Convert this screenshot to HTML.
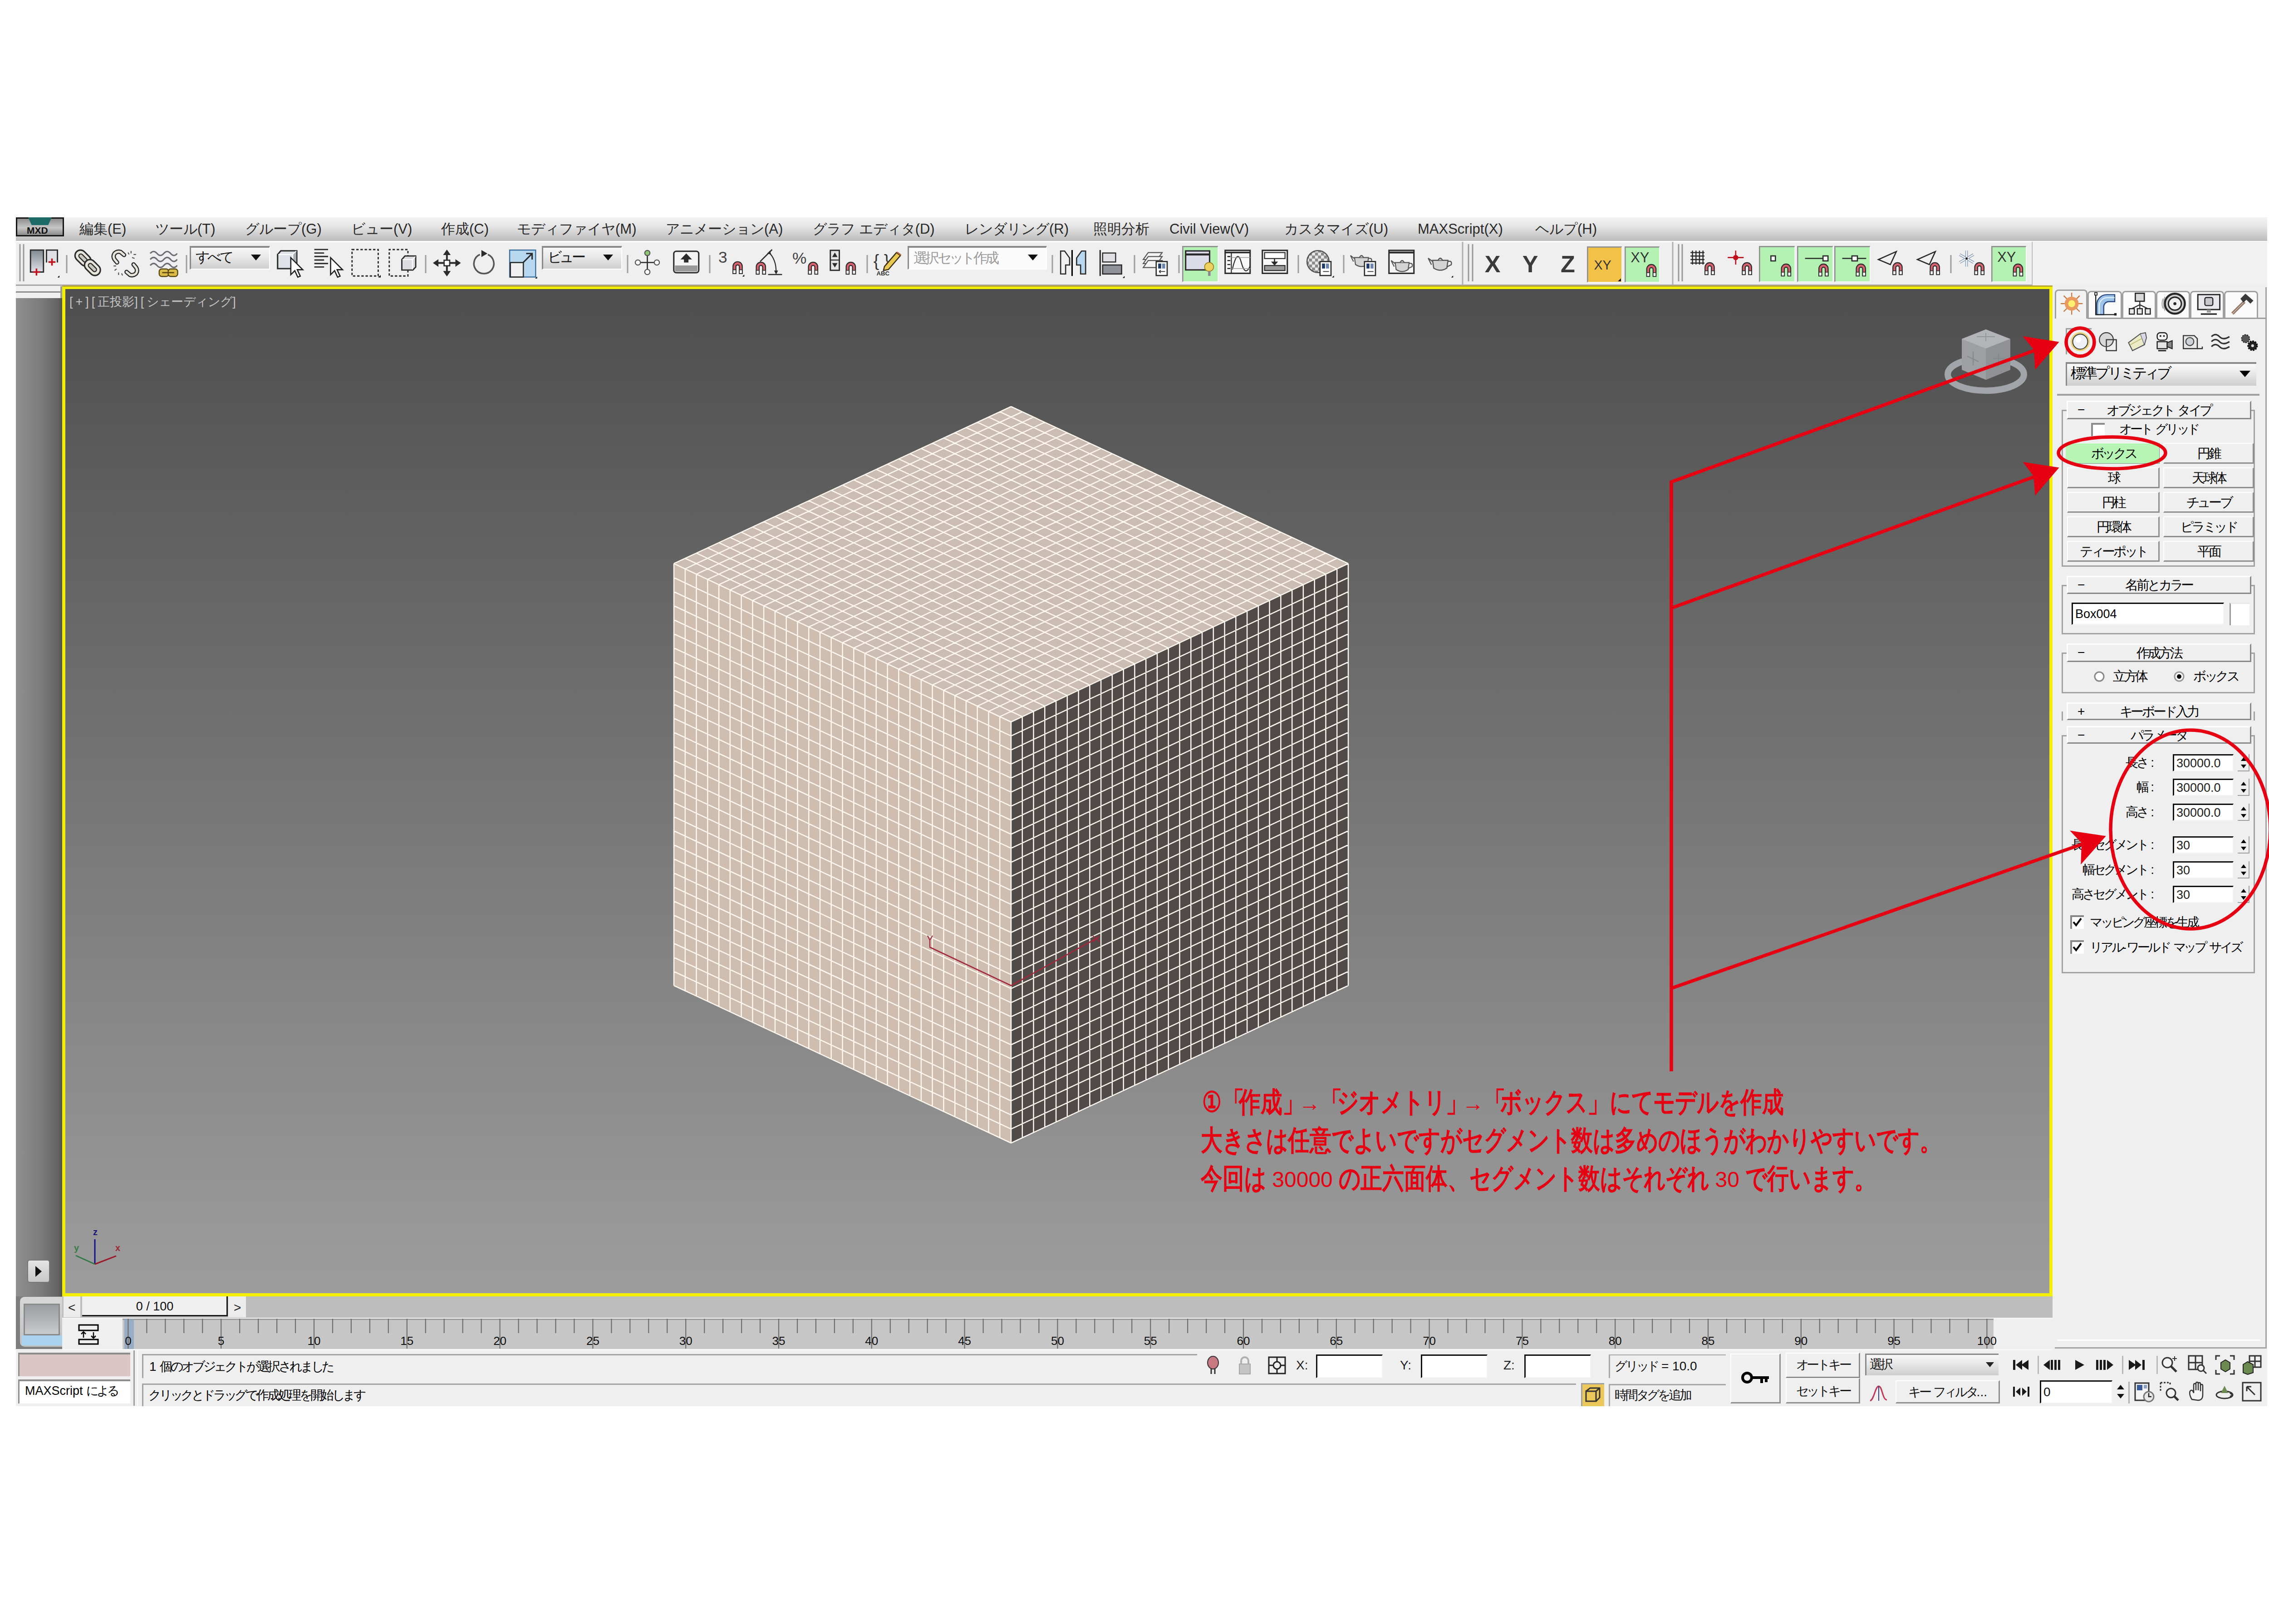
<!DOCTYPE html><html><head><meta charset="utf-8"><style>
*{margin:0;padding:0;box-sizing:border-box}
html,body{width:5031px;height:3579px;background:#fff;overflow:hidden;font-family:"Liberation Sans",sans-serif}
.a{position:absolute}
.t{position:absolute;white-space:nowrap;line-height:1;font-family:"Liberation Sans",sans-serif}
.c{transform:translate(-50%,-50%)}
i{display:inline-block;text-align:center;font-style:normal}
.j i{width:1em}
.k i{width:.85em}
.h i{width:.75em}
.s i{-webkit-text-stroke:1.6px;transform:scaleY(1.3);transform-origin:50% 70%}
.mt{position:absolute;top:489px;font-size:31px;color:#2a2a2a;white-space:nowrap;line-height:32px}
.btn{position:absolute;background:#efefef;border-top:2px solid #fff;border-left:2px solid #fff;border-right:3px solid #8e8e8e;border-bottom:3px solid #8e8e8e}
.fld{position:absolute;background:#fff;border-top:3px solid #111;border-left:3px solid #111;border-right:2px solid #f4f4f4;border-bottom:2px solid #f4f4f4}
.hdr{position:absolute;background:#efefef;border-top:3px solid #fff;border-left:3px solid #fff;border-right:3px solid #8a8a8a;border-bottom:3px solid #8a8a8a}
.grp{position:absolute;border:3px solid #9a9a9a;border-right-color:#9a9a9a;border-bottom-color:#9a9a9a}
</style></head><body><div class="a" style="left:35px;top:479px;width:4961px;height:2620px;background:#efefef"></div><div class="a" style="left:35px;top:479px;width:4961px;height:52px;background:linear-gradient(#f4f4f4,#e4e4e4 40%,#bcbcbc)"></div><div class="a" style="left:35px;top:479px;width:106px;height:42px;background:linear-gradient(#8d8d8d,#c6c6c6 55%,#8a8a8a);border:3px solid #151515"></div><div class="a" style="left:62px;top:479px;width:52px;height:17px;background:#1d6b68;clip-path:polygon(0 0,100% 0,85% 100%,15% 100%)"></div><div class="t" style="left:59px;top:497px;font-size:21px;font-weight:bold;color:#111">MXD</div><div class="mt" style="left:175px"><span class="j"><i>編</i><i>集</i></span>(E)</div><div class="mt" style="left:342px"><span class="j"><i>ツ</i><i>ー</i><i>ル</i></span>(T)</div><div class="mt" style="left:540px"><span class="j"><i>グ</i><i>ル</i><i>ー</i><i>プ</i></span>(G)</div><div class="mt" style="left:774px"><span class="j"><i>ビ</i><i>ュ</i><i>ー</i></span>(V)</div><div class="mt" style="left:972px"><span class="j"><i>作</i><i>成</i></span>(C)</div><div class="mt" style="left:1139px"><span class="j"><i>モ</i><i>デ</i><i>ィ</i><i>フ</i><i>ァ</i><i>イ</i><i>ヤ</i></span>(M)</div><div class="mt" style="left:1467px"><span class="j"><i>ア</i><i>ニ</i><i>メ</i><i>ー</i><i>シ</i><i>ョ</i><i>ン</i></span>(A)</div><div class="mt" style="left:1791px"><span class="j"><i>グ</i><i>ラ</i><i>フ</i></span> <span class="j"><i>エ</i><i>デ</i><i>ィ</i><i>タ</i></span>(D)</div><div class="mt" style="left:2126px"><span class="j"><i>レ</i><i>ン</i><i>ダ</i><i>リ</i><i>ン</i><i>グ</i></span>(R)</div><div class="mt" style="left:2409px"><span class="j"><i>照</i><i>明</i><i>分</i><i>析</i></span></div><div class="mt" style="left:2577px">Civil View(V)</div><div class="mt" style="left:2830px"><span class="j"><i>カ</i><i>ス</i><i>タ</i><i>マ</i><i>イ</i><i>ズ</i></span>(U)</div><div class="mt" style="left:3124px">MAXScript(X)</div><div class="mt" style="left:3383px"><span class="j"><i>ヘ</i><i>ル</i><i>プ</i></span>(H)</div><div class="a" style="left:35px;top:531px;width:4961px;height:98px;background:#efefef"></div><div class="a" style="left:35px;top:531px;width:4961px;height:3px;background:#fdfdfd"></div><div class="a" style="left:35px;top:627px;width:4444px;height:3px;background:#a8a8a8"></div><svg class="a" style="left:0;top:0" width="5031" height="700"><g transform="translate(65,550) scale(2.2)"><defs><linearGradient id="gsl" x1="0" y1="0" x2="0" y2="1"><stop offset="0" stop-color="#7f8a90"/><stop offset="1" stop-color="#e0e0ea"/></linearGradient></defs><rect x="1" y="0.5" width="13" height="22" fill="url(#gsl)" stroke="#2b2b2b" stroke-width="1.3"/><path d="M17 13V0.5H28V13" fill="#dfe0e6" stroke="#2b2b2b" stroke-width="1.3"/><path d="M7 19V26M3.5 22.5H10.5M22.5 9V16M19 12.5H26" stroke="#c0101a" stroke-width="1.6"/><polygon points="28,28 30,26 30,28" fill="#000"/></g><g transform="translate(163,550) scale(2.2)"><g transform="translate(9,8.5) rotate(-45)"><rect x="-5.5" y="-9" width="11" height="18" rx="5.5" fill="#e8e6dc" stroke="#2b2b2b" stroke-width="1.4"/><rect x="-2" y="-5" width="4" height="10" rx="2" fill="#c8c8c0" stroke="#2b2b2b" stroke-width="1.1"/></g><g transform="translate(18.5,18) rotate(-45)"><rect x="-5.5" y="-9" width="11" height="18" rx="5.5" fill="#e8e6dc" stroke="#2b2b2b" stroke-width="1.4"/><rect x="-2" y="-5" width="4" height="10" rx="2" fill="#c8c8c0" stroke="#2b2b2b" stroke-width="1.1"/></g></g><g transform="translate(247,552) scale(2.2)"><path d="M5 12L2.5 9Q0.5 6 2.5 3Q5 0.5 8.5 1.5L12 4.5" fill="none" stroke="#2b2b2b" stroke-width="4.4" stroke-linecap="round"/><path d="M5 12L2.5 9Q0.5 6 2.5 3Q5 0.5 8.5 1.5L12 4.5" fill="none" stroke="#e8e6dc" stroke-width="2.2" stroke-linecap="round"/><path d="M21.5 14L24 17Q26 20 24 23Q21.5 25.5 18 24.5L14.5 21.5" fill="none" stroke="#2b2b2b" stroke-width="4.4" stroke-linecap="round"/><path d="M21.5 14L24 17Q26 20 24 23Q21.5 25.5 18 24.5L14.5 21.5" fill="none" stroke="#e8e6dc" stroke-width="2.2" stroke-linecap="round"/><path d="M16 2L17 4M19 0.5V3M21.5 4H24M20 7L22.5 8M1.5 15.5H4M2.5 20L4.5 18.5M6.5 22V24.5M9.5 23L10.5 25" stroke="#555" stroke-width="1"/></g><g transform="translate(331,552) scale(2.2)"><path d="M0 3Q3.4 -1 6.8 3T13.6 3T20.4 3T27 3M0 9Q3.4 5 6.8 9T13.6 9T20.4 9T27 9M0 15Q3.4 11 6.8 15T13.6 15T20.4 15T27 15" fill="none" stroke="#6a6e74" stroke-width="1.4"/><rect x="9" y="18.5" width="9.5" height="7.5" rx="2.5" fill="#dcbc48" stroke="#5a4810" stroke-width="1.1"/><rect x="18" y="18.5" width="9.5" height="7.5" rx="2.5" fill="#dcbc48" stroke="#5a4810" stroke-width="1.1"/><path d="M12 22.2H24" stroke="#5a4810" stroke-width="1.2"/></g><g transform="translate(610,551) scale(2.2)"><path d="M0.8 4.5L4 0.8H20V18.6H0.8Z" fill="#dfe2e8" stroke="#2b2b2b" stroke-width="1.4"/><path d="M1.5 4.5H16V18M16 4.5L19.5 1" fill="none" stroke="#fff" stroke-width="1"/><path d="M16.5 4.5L19.5 1.5V16L16.5 18Z" fill="#a8acb4"/><path d="M14 7.7V24.7L18 20.7L21 27.2L23.5 26.2L20.5 19.7H26Z" fill="#fff" stroke="#222" stroke-width="1.2" stroke-linejoin="miter"/></g><g transform="translate(690,551) scale(2.2)"><path d="M1.2 -0.5H15M1.2 3H11M1.2 6.5H15M1.2 10H11M1.2 13.5H15M1.2 17H11" stroke="#2b2b2b" stroke-width="1.3"/><path d="M17.5 7.7V24.7L21.5 20.7L24.5 27.2L27.0 26.2L24.0 19.7H29.5Z" fill="#fff" stroke="#222" stroke-width="1.2" stroke-linejoin="miter"/></g><g transform="translate(774,550) scale(2.2)"><rect x="0.8" y="0" width="26.2" height="26.5" fill="none" stroke="#2b2b2b" stroke-width="1.3" stroke-dasharray="2.4 1.8"/><polygon points="27,28 29.5,25.5 29.5,28" fill="#000"/></g><g transform="translate(856,550) scale(2.2)"><path d="M13 26.5H0.8V0H19.5V6" fill="none" stroke="#2b2b2b" stroke-width="1.3" stroke-dasharray="2.4 1.8"/><path d="M19.5 20.5V26.5H13" fill="none" stroke="#2b2b2b" stroke-width="1.3" stroke-dasharray="2.4 1.8"/><path d="M13.4 10L16.5 6.4H27.3V17.5L24.5 20.5H13.4Z" fill="#dcdde0" stroke="#2b2b2b" stroke-width="1.3"/><path d="M14 10H24V20M24 10L27 7" fill="none" stroke="#fff" stroke-width="0.9"/></g><g transform="translate(954,551) scale(2.2)"><path d="M14 3V25M3 13H25" stroke="#2b2b2b" stroke-width="1.8"/><polygon points="14,-0.5 17.8,5 10.2,5" fill="#2b2b2b"/><polygon points="14,26.5 17.8,21 10.2,21" fill="#2b2b2b"/><polygon points="0,13 5.5,9.2 5.5,16.8" fill="#2b2b2b"/><polygon points="28,13 22.5,9.2 22.5,16.8" fill="#2b2b2b"/><rect x="11.2" y="10.2" width="5.6" height="5.6" fill="#fff" stroke="#2b2b2b" stroke-width="1.2"/></g><g transform="translate(1041,551) scale(2.2)"><path d="M15.5 4.5A10 10 0 1 1 7.5 4.5" fill="none" stroke="#555" stroke-width="1.6"/><polygon points="9,0 15,3.5 9,7" fill="#2b2b2b"/></g><g transform="translate(1122,550) scale(2.2)"><rect x="0.5" y="0.5" width="26" height="27" fill="#b8d8f0" stroke="#3a6ea0" stroke-width="1.1"/><rect x="1.2" y="13" width="13" height="14.5" fill="#f0f0f0" stroke="#2b2b2b" stroke-width="1.2"/><path d="M14 13L23 4M17 4H23V10" fill="none" stroke="#2b2b2b" stroke-width="1.4"/><polygon points="26,29 28,27 28,29" fill="#000"/></g><g transform="translate(1399,551) scale(2.2)"><path d="M12.5 4V21M3 12.5H22" stroke="#2b2b2b" stroke-width="1.2"/><circle cx="12.5" cy="3" r="2.6" fill="#8cc870" stroke="#555" stroke-width="1"/><circle cx="3" cy="12.5" r="2.6" fill="#fff" stroke="#555" stroke-width="1"/><circle cx="22" cy="12.5" r="2.6" fill="#fff" stroke="#555" stroke-width="1"/><circle cx="12.5" cy="22" r="2.6" fill="#fff" stroke="#555" stroke-width="1"/></g><g transform="translate(1483,552) scale(2.2)"><rect x="0.8" y="0.8" width="25" height="21.5" rx="2.5" fill="#f4f4f4" stroke="#2b2b2b" stroke-width="1.4"/><rect x="2" y="15" width="22.5" height="6" fill="#9a9a9a"/><polygon points="13.3,3 19,9 15.5,9 15.5,12 11,12 11,9 7.5,9" fill="#2b2b2b"/></g><g transform="translate(1583,550) scale(2.2)"><text x="0" y="13" font-size="16" font-family="Liberation Sans" fill="#444">3</text><g transform="translate(13.5,11) scale(1.45)"><path d="M0.8 9V4A3.2 3.2 0 0 1 7.2 4V9H5.2V4.2A1.2 1.2 0 0 0 2.8 4.2V9Z" fill="#d8636e" stroke="#2b2b2b" stroke-width="0.7"/><rect x="0.8" y="6.4" width="2" height="2.6" fill="#fff" stroke="#2b2b2b" stroke-width="0.5"/><rect x="5.2" y="6.4" width="2" height="2.6" fill="#fff" stroke="#2b2b2b" stroke-width="0.5"/></g><polygon points="24,27 26,25 26,27" fill="#000"/></g><g transform="translate(1664,550) scale(2.2)"><g transform="translate(0,11.5) scale(1.45)"><path d="M0.8 9V4A3.2 3.2 0 0 1 7.2 4V9H5.2V4.2A1.2 1.2 0 0 0 2.8 4.2V9Z" fill="#d8636e" stroke="#2b2b2b" stroke-width="0.7"/><rect x="0.8" y="6.4" width="2" height="2.6" fill="#fff" stroke="#2b2b2b" stroke-width="0.5"/><rect x="5.2" y="6.4" width="2" height="2.6" fill="#fff" stroke="#2b2b2b" stroke-width="0.5"/></g><path d="M5 12L17 0M13 25H27" stroke="#2b2b2b" stroke-width="1.2"/><path d="M14 3Q21 10 21 22" fill="none" stroke="#2b2b2b" stroke-width="1"/><polygon points="19,21 23,21 21,25" fill="#2b2b2b"/><polygon points="12,4 15,1 16,5" fill="#2b2b2b"/></g><g transform="translate(1746,550) scale(2.2)"><text x="0" y="14" font-size="16" font-family="Liberation Sans" fill="#444">%</text><g transform="translate(15,11.5) scale(1.45)"><path d="M0.8 9V4A3.2 3.2 0 0 1 7.2 4V9H5.2V4.2A1.2 1.2 0 0 0 2.8 4.2V9Z" fill="#d8636e" stroke="#2b2b2b" stroke-width="0.7"/><rect x="0.8" y="6.4" width="2" height="2.6" fill="#fff" stroke="#2b2b2b" stroke-width="0.5"/><rect x="5.2" y="6.4" width="2" height="2.6" fill="#fff" stroke="#2b2b2b" stroke-width="0.5"/></g></g><g transform="translate(1828,550) scale(2.2)"><rect x="0.8" y="0.8" width="9" height="20" fill="#e4e4e4" stroke="#2b2b2b" stroke-width="1.3"/><path d="M1 10.5H10" stroke="#2b2b2b" stroke-width="1"/><polygon points="5.3,3 8,7.5 2.6,7.5" fill="#2b2b2b"/><polygon points="5.3,18 8,13.5 2.6,13.5" fill="#2b2b2b"/><g transform="translate(15.5,11.5) scale(1.45)"><path d="M0.8 9V4A3.2 3.2 0 0 1 7.2 4V9H5.2V4.2A1.2 1.2 0 0 0 2.8 4.2V9Z" fill="#d8636e" stroke="#2b2b2b" stroke-width="0.7"/><rect x="0.8" y="6.4" width="2" height="2.6" fill="#fff" stroke="#2b2b2b" stroke-width="0.5"/><rect x="5.2" y="6.4" width="2" height="2.6" fill="#fff" stroke="#2b2b2b" stroke-width="0.5"/></g></g><g transform="translate(1927,550) scale(2.2)"><text x="-1" y="17" font-size="17" font-family="Liberation Sans" fill="#333">{ }</text><text x="2" y="26" font-size="6" font-weight="bold" font-family="Liberation Sans" fill="#333">ABC</text><path d="M10 17L22 3L26 6L14 20L9 21Z" fill="#e8c850" stroke="#3a2a10" stroke-width="1.1"/><path d="M22 3L26 6L27 5L23 2Z" fill="#b06a3a"/></g><g transform="translate(2335,551) scale(2.2)"><path d="M1 1L5 1L10 8V15L6 15V24H1Z" fill="#f0f0f0" stroke="#2b2b2b" stroke-width="1.2"/><path d="M12.5 0V26" stroke="#000" stroke-width="1.4"/><path d="M26 1H22L17 8V15H21V24H26Z" fill="#b8d8f0" stroke="#2b2b2b" stroke-width="1.2"/></g><g transform="translate(2421,551) scale(2.2)"><path d="M1.5 0V26" stroke="#2b2b2b" stroke-width="1.4"/><rect x="4" y="3" width="13" height="9" fill="#e0e0e4" stroke="#2b2b2b" stroke-width="1.1"/><rect x="4" y="15" width="19" height="9" fill="#8f9299" stroke="#2b2b2b" stroke-width="1.2"/><polygon points="24,28 26,26 26,28" fill="#000"/></g><g transform="translate(2517,550) scale(2.2)"><path d="M1 10L6 3H20L15 10Z" fill="#f4f4f4" stroke="#555" stroke-width="1"/><path d="M1 14L6 7H20L15 14Z" fill="#f4f4f4" stroke="#555" stroke-width="1"/><path d="M1 18L6 11H20L15 18Z" fill="#f4f4f4" stroke="#555" stroke-width="1"/><rect x="14" y="12" width="11" height="14" fill="#fff" stroke="#2b2b2b" stroke-width="1.2"/><rect x="16" y="14" width="3" height="5" fill="#1e3a6a"/><rect x="20" y="14" width="3" height="5" fill="#6a86b0"/><path d="M17 22H23M17 22L18.5 20.5M17 22L18.5 23.5" stroke="#333" stroke-width="0.8"/></g><g transform="translate(2605,542) scale(2.2)"><rect x="0" y="0" width="36" height="36" fill="#b4f2b4"/><path d="M0.6 36V0.6H36" fill="none" stroke="#8f8f8f" stroke-width="1.2"/><path d="M36 0.6V36H0.6" fill="none" stroke="#fafafa" stroke-width="0.8"/><rect x="3.5" y="5" width="24" height="19" fill="#dcdce8" stroke="#2b2b2b" stroke-width="1.4"/><path d="M3.5 8.5H27.5" stroke="#2b2b2b" stroke-width="2"/><circle cx="27" cy="21" r="4.5" fill="#f0d060" stroke="#a08020" stroke-width="0.8"/><rect x="26" y="25" width="2.4" height="5" fill="#888"/></g><g transform="translate(2698,550) scale(2.2)"><rect x="0.8" y="0.8" width="25" height="23" fill="#f8f8f8" stroke="#2b2b2b" stroke-width="1.4"/><path d="M1 3H26" stroke="#2b2b2b" stroke-width="1.6"/><path d="M7 3V24" stroke="#2b2b2b" stroke-width="1"/><path d="M3 7H6M3 11H6M3 15H6M3 19H6" stroke="#2b2b2b" stroke-width="1.2"/><path d="M8 20Q13 -2 17 13T26 16" fill="none" stroke="#2b2b2b" stroke-width="1"/><path d="M7 8H26M7 19H26" stroke="#999" stroke-width="0.7"/></g><g transform="translate(2780,550) scale(2.2)"><rect x="0.8" y="0.8" width="25" height="23" fill="#f8f8f8" stroke="#2b2b2b" stroke-width="1.4"/><rect x="3" y="3" width="20.5" height="6" fill="#fff" stroke="#2b2b2b" stroke-width="1"/><rect x="3" y="16" width="20.5" height="5" fill="#9a9a9a" stroke="#2b2b2b" stroke-width="1"/><path d="M13 9V14" stroke="#2b2b2b" stroke-width="1.2"/><polygon points="9.5,12 16.5,12 13,16" fill="#2b2b2b"/></g><g transform="translate(2878,550) scale(2.2)"><defs><pattern id="chk" width="6" height="6" patternUnits="userSpaceOnUse"><rect width="6" height="6" fill="#e8e8e8"/><rect width="3" height="3" fill="#8a8a8a"/><rect x="3" y="3" width="3" height="3" fill="#8a8a8a"/></pattern></defs><circle cx="12" cy="12" r="11" fill="url(#chk)" stroke="#555" stroke-width="1.2"/><rect x="14" y="12" width="11" height="14" fill="#fff" stroke="#2b2b2b" stroke-width="1.2"/><rect x="16" y="14" width="3" height="5" fill="#1e3a6a"/><rect x="20" y="14" width="3" height="5" fill="#6a86b0"/><path d="M17 22H23" stroke="#333" stroke-width="0.8"/><polygon points="26,28 28,26 28,28" fill="#000"/></g><g transform="translate(2976,550) scale(2.2)"><g transform="translate(0,0) scale(1)"><path d="M4 8H18L17 15Q11 19 5 15Z" fill="#d4d4d4" stroke="#555" stroke-width="1"/><path d="M9 8Q11 4 13 8" fill="#c0c0c0" stroke="#555" stroke-width="1"/><path d="M4 9L0 6L3 12M18 9Q22 8 21 12L17 14" fill="none" stroke="#555" stroke-width="1"/></g><rect x="14" y="12" width="11" height="14" fill="#fff" stroke="#2b2b2b" stroke-width="1.2"/><rect x="16" y="14" width="3" height="5" fill="#1e3a6a"/><rect x="20" y="14" width="3" height="5" fill="#6a86b0"/><path d="M17 22H23" stroke="#333" stroke-width="0.8"/></g><g transform="translate(3059,550) scale(2.2)"><rect x="0.8" y="0.8" width="25" height="23" fill="#f4f4f4" stroke="#2b2b2b" stroke-width="1.4"/><path d="M1 3H26" stroke="#2b2b2b" stroke-width="1.8"/><g transform="translate(3,5) scale(1)"><path d="M4 8H18L17 15Q11 19 5 15Z" fill="#d4d4d4" stroke="#555" stroke-width="1"/><path d="M9 8Q11 4 13 8" fill="#c0c0c0" stroke="#555" stroke-width="1"/><path d="M4 9L0 6L3 12M18 9Q22 8 21 12L17 14" fill="none" stroke="#555" stroke-width="1"/></g></g><g transform="translate(3145,550) scale(2.2)"><g transform="translate(1,2) scale(1.1)"><path d="M4 8H18L17 15Q11 19 5 15Z" fill="#d4d4d4" stroke="#555" stroke-width="1"/><path d="M9 8Q11 4 13 8" fill="#c0c0c0" stroke="#555" stroke-width="1"/><path d="M4 9L0 6L3 12M18 9Q22 8 21 12L17 14" fill="none" stroke="#555" stroke-width="1"/></g><polygon points="24,28 26,26 26,28" fill="#000"/></g><g transform="translate(3497,543) scale(2.2)"><rect x="0" y="0" width="35" height="36" fill="#f2c248"/><path d="M0.6 36V0.6H35" fill="none" stroke="#8f8f8f" stroke-width="1.2"/><path d="M35 0.6V36H0.6" fill="none" stroke="#fafafa" stroke-width="0.8"/><text x="7" y="23" font-size="13" font-family="Liberation Sans" fill="#333">XY</text><polygon points="31,35 34,32 34,35" fill="#000"/></g><g transform="translate(3580,543) scale(2.2)"><rect x="0" y="0" width="35" height="36" fill="#b4f2b4"/><path d="M0.6 36V0.6H35" fill="none" stroke="#8f8f8f" stroke-width="1.2"/><path d="M35 0.6V36H0.6" fill="none" stroke="#fafafa" stroke-width="0.8"/><text x="6" y="16" font-size="14" font-family="Liberation Sans" fill="#333">XY</text><g transform="translate(21,17) scale(1.45)"><path d="M0.8 9V4A3.2 3.2 0 0 1 7.2 4V9H5.2V4.2A1.2 1.2 0 0 0 2.8 4.2V9Z" fill="#d8636e" stroke="#2b2b2b" stroke-width="0.7"/><rect x="0.8" y="6.4" width="2" height="2.6" fill="#fff" stroke="#2b2b2b" stroke-width="0.5"/><rect x="5.2" y="6.4" width="2" height="2.6" fill="#fff" stroke="#2b2b2b" stroke-width="0.5"/></g></g><g transform="translate(3723,550) scale(2.2)"><path d="M3 1V15M6.5 1V15M10 1V15M13.5 1V15M1 3H15M1 6.5H15M1 10H15M1 13.5H15" stroke="#2b2b2b" stroke-width="1.1"/><g transform="translate(14.4,12) scale(1.45)"><path d="M0.8 9V4A3.2 3.2 0 0 1 7.2 4V9H5.2V4.2A1.2 1.2 0 0 0 2.8 4.2V9Z" fill="#d8636e" stroke="#2b2b2b" stroke-width="0.7"/><rect x="0.8" y="6.4" width="2" height="2.6" fill="#fff" stroke="#2b2b2b" stroke-width="0.5"/><rect x="5.2" y="6.4" width="2" height="2.6" fill="#fff" stroke="#2b2b2b" stroke-width="0.5"/></g></g><g transform="translate(3805,550) scale(2.2)"><path d="M9 1V15M1 8H17" stroke="#c0101a" stroke-width="1.2"/><circle cx="9" cy="8" r="2.6" fill="#c0101a"/><g transform="translate(14.5,12) scale(1.45)"><path d="M0.8 9V4A3.2 3.2 0 0 1 7.2 4V9H5.2V4.2A1.2 1.2 0 0 0 2.8 4.2V9Z" fill="#d8636e" stroke="#2b2b2b" stroke-width="0.7"/><rect x="0.8" y="6.4" width="2" height="2.6" fill="#fff" stroke="#2b2b2b" stroke-width="0.5"/><rect x="5.2" y="6.4" width="2" height="2.6" fill="#fff" stroke="#2b2b2b" stroke-width="0.5"/></g></g><g transform="translate(3876,542) scale(2.2)"><rect x="0" y="0" width="36" height="36" fill="#b4f2b4"/><path d="M0.6 36V0.6H36" fill="none" stroke="#8f8f8f" stroke-width="1.2"/><path d="M36 0.6V36H0.6" fill="none" stroke="#fafafa" stroke-width="0.8"/><rect x="12" y="10" width="4.5" height="5" fill="#fff" stroke="#2b2b2b" stroke-width="1.2"/><g transform="translate(21.4,17) scale(1.45)"><path d="M0.8 9V4A3.2 3.2 0 0 1 7.2 4V9H5.2V4.2A1.2 1.2 0 0 0 2.8 4.2V9Z" fill="#d8636e" stroke="#2b2b2b" stroke-width="0.7"/><rect x="0.8" y="6.4" width="2" height="2.6" fill="#fff" stroke="#2b2b2b" stroke-width="0.5"/><rect x="5.2" y="6.4" width="2" height="2.6" fill="#fff" stroke="#2b2b2b" stroke-width="0.5"/></g></g><g transform="translate(3960,542) scale(2.2)"><rect x="0" y="0" width="36" height="36" fill="#b4f2b4"/><path d="M0.6 36V0.6H36" fill="none" stroke="#8f8f8f" stroke-width="1.2"/><path d="M36 0.6V36H0.6" fill="none" stroke="#fafafa" stroke-width="0.8"/><path d="M8 12.5H27" stroke="#2b2b2b" stroke-width="1.2"/><rect x="26" y="10" width="5" height="5" fill="#fff" stroke="#2b2b2b" stroke-width="1.2"/><g transform="translate(20.7,17) scale(1.45)"><path d="M0.8 9V4A3.2 3.2 0 0 1 7.2 4V9H5.2V4.2A1.2 1.2 0 0 0 2.8 4.2V9Z" fill="#d8636e" stroke="#2b2b2b" stroke-width="0.7"/><rect x="0.8" y="6.4" width="2" height="2.6" fill="#fff" stroke="#2b2b2b" stroke-width="0.5"/><rect x="5.2" y="6.4" width="2" height="2.6" fill="#fff" stroke="#2b2b2b" stroke-width="0.5"/></g></g><g transform="translate(4042,542) scale(2.2)"><rect x="0" y="0" width="36" height="36" fill="#b4f2b4"/><path d="M0.6 36V0.6H36" fill="none" stroke="#8f8f8f" stroke-width="1.2"/><path d="M36 0.6V36H0.6" fill="none" stroke="#fafafa" stroke-width="0.8"/><path d="M8 12.5H32" stroke="#2b2b2b" stroke-width="1.2"/><rect x="17.7" y="10" width="5.5" height="5" fill="#fff" stroke="#2b2b2b" stroke-width="1.2"/><g transform="translate(20.9,17) scale(1.45)"><path d="M0.8 9V4A3.2 3.2 0 0 1 7.2 4V9H5.2V4.2A1.2 1.2 0 0 0 2.8 4.2V9Z" fill="#d8636e" stroke="#2b2b2b" stroke-width="0.7"/><rect x="0.8" y="6.4" width="2" height="2.6" fill="#fff" stroke="#2b2b2b" stroke-width="0.5"/><rect x="5.2" y="6.4" width="2" height="2.6" fill="#fff" stroke="#2b2b2b" stroke-width="0.5"/></g></g><g transform="translate(4137,550) scale(2.2)"><path d="M1 10L19 2L13 15Z" fill="none" stroke="#2b2b2b" stroke-width="1.2"/><g transform="translate(14.4,12) scale(1.45)"><path d="M0.8 9V4A3.2 3.2 0 0 1 7.2 4V9H5.2V4.2A1.2 1.2 0 0 0 2.8 4.2V9Z" fill="#d8636e" stroke="#2b2b2b" stroke-width="0.7"/><rect x="0.8" y="6.4" width="2" height="2.6" fill="#fff" stroke="#2b2b2b" stroke-width="0.5"/><rect x="5.2" y="6.4" width="2" height="2.6" fill="#fff" stroke="#2b2b2b" stroke-width="0.5"/></g></g><g transform="translate(4223,550) scale(2.2)"><path d="M1 10L19 2L13 15Z" fill="none" stroke="#2b2b2b" stroke-width="1.2"/><g transform="translate(12.7,12) scale(1.45)"><path d="M0.8 9V4A3.2 3.2 0 0 1 7.2 4V9H5.2V4.2A1.2 1.2 0 0 0 2.8 4.2V9Z" fill="#d8636e" stroke="#2b2b2b" stroke-width="0.7"/><rect x="0.8" y="6.4" width="2" height="2.6" fill="#fff" stroke="#2b2b2b" stroke-width="0.5"/><rect x="5.2" y="6.4" width="2" height="2.6" fill="#fff" stroke="#2b2b2b" stroke-width="0.5"/></g></g><g transform="translate(4316,550) scale(2.2)"><path d="M8 1V17M1 5L15 13M1 13L15 5" stroke="#8aa0c0" stroke-width="2.6"/><path d="M8 1V17M1 5L15 13M1 13L15 5" stroke="#fff" stroke-width="1.1"/><rect x="7" y="8" width="2" height="2" fill="#000"/><g transform="translate(15,12) scale(1.45)"><path d="M0.8 9V4A3.2 3.2 0 0 1 7.2 4V9H5.2V4.2A1.2 1.2 0 0 0 2.8 4.2V9Z" fill="#d8636e" stroke="#2b2b2b" stroke-width="0.7"/><rect x="0.8" y="6.4" width="2" height="2.6" fill="#fff" stroke="#2b2b2b" stroke-width="0.5"/><rect x="5.2" y="6.4" width="2" height="2.6" fill="#fff" stroke="#2b2b2b" stroke-width="0.5"/></g></g><g transform="translate(4388,542) scale(2.2)"><rect x="0" y="0" width="35" height="36" fill="#b4f2b4"/><path d="M0.6 36V0.6H35" fill="none" stroke="#8f8f8f" stroke-width="1.2"/><path d="M35 0.6V36H0.6" fill="none" stroke="#fafafa" stroke-width="0.8"/><text x="6" y="16" font-size="14" font-family="Liberation Sans" fill="#333">XY</text><g transform="translate(21,17) scale(1.45)"><path d="M0.8 9V4A3.2 3.2 0 0 1 7.2 4V9H5.2V4.2A1.2 1.2 0 0 0 2.8 4.2V9Z" fill="#d8636e" stroke="#2b2b2b" stroke-width="0.7"/><rect x="0.8" y="6.4" width="2" height="2.6" fill="#fff" stroke="#2b2b2b" stroke-width="0.5"/><rect x="5.2" y="6.4" width="2" height="2.6" fill="#fff" stroke="#2b2b2b" stroke-width="0.5"/></g></g><path d="M147 562V602M411 562V602M938 562V602M1383 562V602M1564 562V602M1911 562V602M2319 562V602M2500 562V602M2598 562V602M2861 562V602M2961 562V602M4299 562V602" stroke="#a0a0a0" stroke-width="3"/><path d="M3223 533V628M3686 533V628M4479 533V628" stroke="#b0b0b0" stroke-width="3"/><path d="M44 538V620M52 538V620M3236 538V620M3245 538V620M3699 538V620M3707 538V620" stroke="#9a9a9a" stroke-width="3"/></svg><div class="t c" style="left:3289px;top:582px;font-size:52px;color:#3a3a3a;font-weight:bold">X</div><div class="t c" style="left:3372px;top:582px;font-size:52px;color:#3a3a3a;font-weight:bold">Y</div><div class="t c" style="left:3455px;top:582px;font-size:52px;color:#3a3a3a;font-weight:bold">Z</div><div class="a" style="left:418px;top:542px;width:177px;height:52px;background:linear-gradient(#f8f8f8,#e6e6e6 50%,#cdcdcd);border-top:4px solid #8a8a8a;border-left:3px solid #8a8a8a;border-right:2px solid #fff;border-bottom:2px solid #fff"></div><div class="t" style="left:431px;top:551px;font-size:31px;color:#111;"><span class="k"><i>す</i><i>べ</i><i>て</i></span></div><svg class="a" style="left:553px;top:561px" width="22" height="14"><polygon points="0,0 22,0 11,13" fill="#111"/></svg><div class="a" style="left:1194px;top:542px;width:177px;height:52px;background:linear-gradient(#f8f8f8,#e6e6e6 50%,#cdcdcd);border-top:4px solid #8a8a8a;border-left:3px solid #8a8a8a;border-right:2px solid #fff;border-bottom:2px solid #fff"></div><div class="t" style="left:1207px;top:551px;font-size:31px;color:#111;"><span class="k"><i>ビ</i><i>ュ</i><i>ー</i></span></div><svg class="a" style="left:1329px;top:561px" width="22" height="14"><polygon points="0,0 22,0 11,13" fill="#111"/></svg><div class="a" style="left:2000px;top:542px;width:307px;height:52px;background:linear-gradient(#f8f8f8,#e6e6e6 50%,#cdcdcd);border-top:4px solid #8a8a8a;border-left:3px solid #8a8a8a;border-right:2px solid #fff;border-bottom:2px solid #fff"></div><div class="t" style="left:2013px;top:551px;font-size:31px;color:#999;"><span class="k"><i>選</i><i>択</i><i>セ</i><i>ッ</i><i>ト</i><i>作</i><i>成</i></span></div><svg class="a" style="left:2265px;top:561px" width="22" height="14"><polygon points="0,0 22,0 11,13" fill="#111"/></svg><div class="a" style="left:2003px;top:546px;width:302px;height:46px;background:#fbfbfb"></div><div class="t" style="left:2013px;top:553px;font-size:31px;color:#9a9a9a;"><span class="k"><i>選</i><i>択</i><i>セ</i><i>ッ</i><i>ト</i><i>作</i><i>成</i></span></div><svg class="a" style="left:2265px;top:561px" width="22" height="14"><polygon points="0,0 22,0 11,13" fill="#111"/></svg><div class="a" style="left:4479px;top:533px;width:517px;height:95px;background:#f1f1f1"></div><div class="a" style="left:137px;top:629px;width:4386px;height:2228px;background:#f4ef00"></div><div class="a" style="left:137px;top:629px;width:4386px;height:3px;background:#b9a63a"></div><div class="a" style="left:144px;top:637px;width:4372px;height:2213px;background:linear-gradient(#4e4e4e,#9d9d9d)"></div><div class="t" style="left:153px;top:652px;font-size:27px;color:#c4c4c4;letter-spacing:6px">[+][<span class="j"><i>正</i><i>投</i><i>影</i></span>][<span class="j"><i>シ</i><i>ェ</i><i>ー</i><i>デ</i><i>ィ</i><i>ン</i><i>グ</i></span>]</div><div class="a" style="left:35px;top:631px;width:102px;height:26px;background:#f0f0f0"></div><div class="a" style="left:35px;top:642px;width:98px;height:3px;background:#8c8c8c"></div><div class="a" style="left:133px;top:631px;width:4px;height:26px;background:#9a9a9a"></div><div class="a" style="left:35px;top:657px;width:102px;height:2200px;background:linear-gradient(90deg,#909090,#7b7b7b 55%,#656565 90%,#4f554f)"></div><div class="a" style="left:60px;top:2776px;width:50px;height:51px;background:linear-gradient(#e4e4e4,#c8c8c8);border:2px solid #777;border-radius:6px"></div><svg class="a" style="left:78px;top:2790px" width="16" height="24"><polygon points="0,0 14,12 0,24" fill="#111"/></svg><svg class="a" style="left:0;top:0" width="5031" height="3579" viewBox="0 0 5031 3579"><polygon points="2228.0,896.0 2971.0,1242.0 2228.0,1591.0 1485.0,1242.0" fill="#cbbdb3"/><polygon points="1485.0,1242.0 2228.0,1591.0 2228.0,2519.0 1485.0,2172.0" fill="#cfbdb0"/><polygon points="2228.0,1591.0 2971.0,1242.0 2971.0,2172.0 2228.0,2519.0" fill="#504b48"/><path d="M2228.0 896.0L1485.0 1242.0M2228.0 896.0L2971.0 1242.0M2252.8 907.5L1509.8 1253.6M2203.2 907.5L2946.2 1253.6M2277.5 919.1L1534.5 1265.3M2178.5 919.1L2921.5 1265.3M2302.3 930.6L1559.3 1276.9M2153.7 930.6L2896.7 1276.9M2327.1 942.1L1584.1 1288.5M2128.9 942.1L2871.9 1288.5M2351.8 953.7L1608.8 1300.2M2104.2 953.7L2847.2 1300.2M2376.6 965.2L1633.6 1311.8M2079.4 965.2L2822.4 1311.8M2401.4 976.7L1658.4 1323.4M2054.6 976.7L2797.6 1323.4M2426.1 988.3L1683.1 1335.1M2029.9 988.3L2772.9 1335.1M2450.9 999.8L1707.9 1346.7M2005.1 999.8L2748.1 1346.7M2475.7 1011.3L1732.7 1358.3M1980.3 1011.3L2723.3 1358.3M2500.4 1022.9L1757.4 1370.0M1955.6 1022.9L2698.6 1370.0M2525.2 1034.4L1782.2 1381.6M1930.8 1034.4L2673.8 1381.6M2550.0 1045.9L1807.0 1393.2M1906.0 1045.9L2649.0 1393.2M2574.7 1057.5L1831.7 1404.9M1881.3 1057.5L2624.3 1404.9M2599.5 1069.0L1856.5 1416.5M1856.5 1069.0L2599.5 1416.5M2624.3 1080.5L1881.3 1428.1M1831.7 1080.5L2574.7 1428.1M2649.0 1092.1L1906.0 1439.8M1807.0 1092.1L2550.0 1439.8M2673.8 1103.6L1930.8 1451.4M1782.2 1103.6L2525.2 1451.4M2698.6 1115.1L1955.6 1463.0M1757.4 1115.1L2500.4 1463.0M2723.3 1126.7L1980.3 1474.7M1732.7 1126.7L2475.7 1474.7M2748.1 1138.2L2005.1 1486.3M1707.9 1138.2L2450.9 1486.3M2772.9 1149.7L2029.9 1497.9M1683.1 1149.7L2426.1 1497.9M2797.6 1161.3L2054.6 1509.6M1658.4 1161.3L2401.4 1509.6M2822.4 1172.8L2079.4 1521.2M1633.6 1172.8L2376.6 1521.2M2847.2 1184.3L2104.2 1532.8M1608.8 1184.3L2351.8 1532.8M2871.9 1195.9L2128.9 1544.5M1584.1 1195.9L2327.1 1544.5M2896.7 1207.4L2153.7 1556.1M1559.3 1207.4L2302.3 1556.1M2921.5 1218.9L2178.5 1567.7M1534.5 1218.9L2277.5 1567.7M2946.2 1230.5L2203.2 1579.4M1509.8 1230.5L2252.8 1579.4M2971.0 1242.0L2228.0 1591.0M1485.0 1242.0L2228.0 1591.0M1485.0 1242.0L1485.0 2172.0M1485.0 1242.0L2228.0 1591.0M1509.8 1253.6L1509.8 2183.6M1485.0 1273.0L2228.0 1621.9M1534.5 1265.3L1534.5 2195.1M1485.0 1304.0L2228.0 1652.9M1559.3 1276.9L1559.3 2206.7M1485.0 1335.0L2228.0 1683.8M1584.1 1288.5L1584.1 2218.3M1485.0 1366.0L2228.0 1714.7M1608.8 1300.2L1608.8 2229.8M1485.0 1397.0L2228.0 1745.7M1633.6 1311.8L1633.6 2241.4M1485.0 1428.0L2228.0 1776.6M1658.4 1323.4L1658.4 2253.0M1485.0 1459.0L2228.0 1807.5M1683.1 1335.1L1683.1 2264.5M1485.0 1490.0L2228.0 1838.5M1707.9 1346.7L1707.9 2276.1M1485.0 1521.0L2228.0 1869.4M1732.7 1358.3L1732.7 2287.7M1485.0 1552.0L2228.0 1900.3M1757.4 1370.0L1757.4 2299.2M1485.0 1583.0L2228.0 1931.3M1782.2 1381.6L1782.2 2310.8M1485.0 1614.0L2228.0 1962.2M1807.0 1393.2L1807.0 2322.4M1485.0 1645.0L2228.0 1993.1M1831.7 1404.9L1831.7 2333.9M1485.0 1676.0L2228.0 2024.1M1856.5 1416.5L1856.5 2345.5M1485.0 1707.0L2228.0 2055.0M1881.3 1428.1L1881.3 2357.1M1485.0 1738.0L2228.0 2085.9M1906.0 1439.8L1906.0 2368.6M1485.0 1769.0L2228.0 2116.9M1930.8 1451.4L1930.8 2380.2M1485.0 1800.0L2228.0 2147.8M1955.6 1463.0L1955.6 2391.8M1485.0 1831.0L2228.0 2178.7M1980.3 1474.7L1980.3 2403.3M1485.0 1862.0L2228.0 2209.7M2005.1 1486.3L2005.1 2414.9M1485.0 1893.0L2228.0 2240.6M2029.9 1497.9L2029.9 2426.5M1485.0 1924.0L2228.0 2271.5M2054.6 1509.6L2054.6 2438.0M1485.0 1955.0L2228.0 2302.5M2079.4 1521.2L2079.4 2449.6M1485.0 1986.0L2228.0 2333.4M2104.2 1532.8L2104.2 2461.2M1485.0 2017.0L2228.0 2364.3M2128.9 1544.5L2128.9 2472.7M1485.0 2048.0L2228.0 2395.3M2153.7 1556.1L2153.7 2484.3M1485.0 2079.0L2228.0 2426.2M2178.5 1567.7L2178.5 2495.9M1485.0 2110.0L2228.0 2457.1M2203.2 1579.4L2203.2 2507.4M1485.0 2141.0L2228.0 2488.1M2228.0 1591.0L2228.0 2519.0M1485.0 2172.0L2228.0 2519.0M2228.0 1591.0L2228.0 2519.0M2228.0 1591.0L2971.0 1242.0M2252.8 1579.4L2252.8 2507.4M2228.0 1621.9L2971.0 1273.0M2277.5 1567.7L2277.5 2495.9M2228.0 1652.9L2971.0 1304.0M2302.3 1556.1L2302.3 2484.3M2228.0 1683.8L2971.0 1335.0M2327.1 1544.5L2327.1 2472.7M2228.0 1714.7L2971.0 1366.0M2351.8 1532.8L2351.8 2461.2M2228.0 1745.7L2971.0 1397.0M2376.6 1521.2L2376.6 2449.6M2228.0 1776.6L2971.0 1428.0M2401.4 1509.6L2401.4 2438.0M2228.0 1807.5L2971.0 1459.0M2426.1 1497.9L2426.1 2426.5M2228.0 1838.5L2971.0 1490.0M2450.9 1486.3L2450.9 2414.9M2228.0 1869.4L2971.0 1521.0M2475.7 1474.7L2475.7 2403.3M2228.0 1900.3L2971.0 1552.0M2500.4 1463.0L2500.4 2391.8M2228.0 1931.3L2971.0 1583.0M2525.2 1451.4L2525.2 2380.2M2228.0 1962.2L2971.0 1614.0M2550.0 1439.8L2550.0 2368.6M2228.0 1993.1L2971.0 1645.0M2574.7 1428.1L2574.7 2357.1M2228.0 2024.1L2971.0 1676.0M2599.5 1416.5L2599.5 2345.5M2228.0 2055.0L2971.0 1707.0M2624.3 1404.9L2624.3 2333.9M2228.0 2085.9L2971.0 1738.0M2649.0 1393.2L2649.0 2322.4M2228.0 2116.9L2971.0 1769.0M2673.8 1381.6L2673.8 2310.8M2228.0 2147.8L2971.0 1800.0M2698.6 1370.0L2698.6 2299.2M2228.0 2178.7L2971.0 1831.0M2723.3 1358.3L2723.3 2287.7M2228.0 2209.7L2971.0 1862.0M2748.1 1346.7L2748.1 2276.1M2228.0 2240.6L2971.0 1893.0M2772.9 1335.1L2772.9 2264.5M2228.0 2271.5L2971.0 1924.0M2797.6 1323.4L2797.6 2253.0M2228.0 2302.5L2971.0 1955.0M2822.4 1311.8L2822.4 2241.4M2228.0 2333.4L2971.0 1986.0M2847.2 1300.2L2847.2 2229.8M2228.0 2364.3L2971.0 2017.0M2871.9 1288.5L2871.9 2218.3M2228.0 2395.3L2971.0 2048.0M2896.7 1276.9L2896.7 2206.7M2228.0 2426.2L2971.0 2079.0M2921.5 1265.3L2921.5 2195.1M2228.0 2457.1L2971.0 2110.0M2946.2 1253.6L2946.2 2183.6M2228.0 2488.1L2971.0 2141.0M2971.0 1242.0L2971.0 2172.0M2228.0 2519.0L2971.0 2172.0" stroke="#fff8f0" stroke-width="2.5" fill="none"/><g stroke="#a3283c" stroke-width="2.6" fill="none"><path d="M2048 2087L2228 2172L2420 2066"/><path d="M2044 2062L2049 2072L2055 2062M2049 2072V2086" stroke-width="2.2"/><path d="M2408 2062L2424 2076M2424 2062L2408 2076" stroke-width="2.2"/></g><g><ellipse cx="4376" cy="825" rx="84" ry="36" fill="none" stroke="#a1a4a9" stroke-width="14"/><polygon points="4376,726 4430,747 4430,815 4376,837 4323,815 4323,747" fill="#9d9fa3"/><polygon points="4376,726 4430,747 4376,768 4323,747" fill="#b2b4b7"/><polygon points="4376,768 4430,747 4430,815 4376,837" fill="#8f9195"/><path d="M4356 742H4396M4376 734V752" stroke="#94969a" stroke-width="2"/><path d="M4335 785L4360 797M4348 775V805M4392 790H4418M4404 778V808" stroke="#86888c" stroke-width="2"/></g><g stroke-width="3" fill="none"><path d="M209 2786V2731" stroke="#14108a"/><path d="M209 2786L167 2767" stroke="#2f7a44"/><path d="M209 2786L256 2768" stroke="#9a1a2c"/></g><text x="205" y="2722" font-size="20" font-weight="bold" fill="#1a1480" font-family="Liberation Sans">z</text><text x="163" y="2757" font-size="20" font-weight="bold" fill="#3a7a48" font-family="Liberation Sans">y</text><text x="254" y="2757" font-size="20" font-weight="bold" fill="#9a2a34" font-family="Liberation Sans">x</text></svg><div class="a" style="left:4523px;top:629px;width:473px;height:2343px;background:#efefef"></div><div class="a" style="left:4992px;top:633px;width:3px;height:2339px;background:#a4a4a4"></div><div class="a" style="left:4528px;top:2969px;width:467px;height:3px;background:#a4a4a4"></div><div class="a" style="left:4528px;top:638px;width:72px;height:64px;background:#f2f2f2;border:3px solid #a0a0a0;border-bottom:none;border-radius:8px 8px 0 0"></div><div class="a" style="left:4600px;top:641px;width:76px;height:61px;background:#fafafa;border:3px solid #a0a0a0;border-bottom:none;border-radius:8px 8px 0 0"></div><div class="a" style="left:4676px;top:641px;width:75px;height:61px;background:#fafafa;border:3px solid #a0a0a0;border-bottom:none;border-radius:8px 8px 0 0"></div><div class="a" style="left:4751px;top:641px;width:75px;height:61px;background:#fafafa;border:3px solid #a0a0a0;border-bottom:none;border-radius:8px 8px 0 0"></div><div class="a" style="left:4826px;top:641px;width:75px;height:61px;background:#fafafa;border:3px solid #a0a0a0;border-bottom:none;border-radius:8px 8px 0 0"></div><div class="a" style="left:4901px;top:641px;width:75px;height:61px;background:#fafafa;border:3px solid #a0a0a0;border-bottom:none;border-radius:8px 8px 0 0"></div><div class="a" style="left:4600px;top:700px;width:395px;height:3px;background:#9e9e9e"></div><svg class="a" style="left:0;top:0" width="5031" height="900"><g transform="translate(4541,645) scale(2.2)"><path d="M11 0V22M0 11H22M3 3L19 19M19 3L3 19" stroke="#c8703a" stroke-width="1"/><circle cx="11" cy="11" r="7" fill="#e89a60"/><circle cx="11" cy="11" r="3.5" fill="#fff070"/></g><g transform="translate(4616,645) scale(2.2)"><path d="M2 22V12A10 10 0 0 1 12 2H20V9H14A5 5 0 0 0 9 14V22Z" fill="#9ec4ea" stroke="#2a4a80" stroke-width="1.1"/><path d="M4.5 22V13A8 8 0 0 1 12.5 5H20" fill="none" stroke="#e8f2ff" stroke-width="1"/><path d="M1 1V22H21" fill="none" stroke="#222" stroke-width="1.1"/><rect x="0" y="0" width="2.4" height="2.4" fill="#fff" stroke="#222" stroke-width="0.8"/><rect x="19.5" y="20.5" width="2.4" height="2.4" fill="#222"/></g><g transform="translate(4690,645) scale(2.2)"><rect x="7" y="0.6" width="9" height="8" fill="#d8d8d8" stroke="#262626" stroke-width="1.2"/><path d="M11.5 8.6V12M11.5 12L3.5 16M11.5 12V16M11.5 12L19.5 16" stroke="#262626" stroke-width="1"/><rect x="1" y="16" width="5" height="5.5" fill="#e8e8e8" stroke="#262626" stroke-width="1.1"/><rect x="9" y="16" width="5" height="5.5" fill="#e8e8e8" stroke="#262626" stroke-width="1.1"/><rect x="17" y="16" width="5" height="5.5" fill="#e8e8e8" stroke="#262626" stroke-width="1.1"/></g><g transform="translate(4764,645) scale(2.2)"><circle cx="13" cy="11" r="10" fill="#d0d0d0" stroke="#262626" stroke-width="2"/><circle cx="13" cy="11" r="6.5" fill="#f0f0f0" stroke="#262626" stroke-width="1.4"/><circle cx="13" cy="11" r="1.5" fill="#262626"/><path d="M3 4Q0 11 3 18M1.2 6Q-1 11 1.2 16" fill="none" stroke="#999" stroke-width="0.8"/></g><g transform="translate(4841,647) scale(2.2)"><rect x="1" y="1" width="22" height="15" fill="#e8e8ec" stroke="#262626" stroke-width="1.3"/><rect x="8" y="4" width="8" height="8" rx="1.5" fill="#c8c8cc" stroke="#262626" stroke-width="1.1"/><rect x="10" y="16" width="4" height="3" fill="#999"/><path d="M4 20.5H20" stroke="#262626" stroke-width="1.4"/></g><g transform="translate(4915,645) scale(2.2)"><path d="M2 21L14 9" stroke="#8a7060" stroke-width="3"/><path d="M2 21L14 9" stroke="#c8b0a0" stroke-width="1"/><path d="M10 6L15 1L23 8L20 11L16 7L13 10Z" fill="#3a3a3a"/></g><g transform="translate(4562,731) scale(2.2)"><circle cx="10" cy="10" r="9.5" fill="#ecd278"/><circle cx="10" cy="10" r="7.5" fill="#eef0f6" stroke="#3a3a3a" stroke-width="0.9"/><circle cx="8" cy="8" r="3" fill="#fff"/></g><g transform="translate(4624,731) scale(2.2)"><circle cx="8" cy="8" r="7" fill="#d8d8d8" stroke="#3a3a3a" stroke-width="1"/><rect x="8" y="8" width="10" height="11" fill="none" stroke="#3a3a3a" stroke-width="1.1"/></g><g transform="translate(4686,731) scale(2.2)"><path d="M2 11L14 2L18 13L6 19Z" fill="#ecebc8" stroke="#555" stroke-width="1"/><path d="M14 2L19 1L20 6L18 13" fill="#d8d8e8" stroke="#555" stroke-width="0.9"/><path d="M4 13L15 7" stroke="#c8c080" stroke-width="1"/></g><g transform="translate(4747,731) scale(2.2)"><rect x="3" y="1" width="10" height="7.5" rx="3" fill="#f4f4f4" stroke="#222" stroke-width="1.1"/><rect x="5.5" y="3.5" width="1.6" height="1.6" fill="#222"/><rect x="9" y="3.5" width="1.6" height="1.6" fill="#222"/><rect x="3" y="10" width="10" height="7" fill="#e4e4e4" stroke="#222" stroke-width="1.1"/><path d="M13 11L18 9V17L13 15Z" fill="#888" stroke="#222" stroke-width="1"/><path d="M4 19H12" stroke="#222" stroke-width="1.3"/></g><g transform="translate(4809,733) scale(2.2)"><path d="M1 16V3H12L15 6V16Z" fill="#e8e8e8" stroke="#333" stroke-width="1.1"/><circle cx="7.5" cy="9" r="4" fill="#cfd2d8" stroke="#444" stroke-width="1"/><path d="M15 16H20V14" fill="none" stroke="#333" stroke-width="1.1"/></g><g transform="translate(4871,733) scale(2.2)"><path d="M1 4Q5 0 9 4T19 4M1 9Q5 5 9 9T19 9M1 14Q5 10 9 14T19 14" fill="none" stroke="#333" stroke-width="1.5"/></g><g transform="translate(4933,731) scale(2.2)"><circle cx="7" cy="7" r="4" fill="#555" stroke="#222" stroke-width="1" stroke-dasharray="1.5 1"/><circle cx="14" cy="14" r="4.5" fill="#222" stroke="#111" stroke-width="1.6" stroke-dasharray="1.6 1"/><circle cx="14" cy="14" r="1.4" fill="#ddd"/></g></svg><div class="a" style="left:4552px;top:723px;width:57px;height:58px;border-left:3px solid #a0a0a0;border-top:3px solid #a0a0a0"></div><div class="a" style="left:4552px;top:798px;width:420px;height:52px;background:linear-gradient(#fafafa,#e8e8e8 45%,#cdcdcd);border-top:4px solid #8a8a8a;border-left:3px solid #8a8a8a"></div><div class="t" style="left:4563px;top:806px;font-size:32px;color:#000;"><span class="k"><i>標</i><i>準</i><i>プ</i><i>リ</i><i>ミ</i><i>テ</i><i>ィ</i><i>ブ</i></span></div><svg class="a" style="left:4935px;top:817px" width="24" height="14"><polygon points="0,0 24,0 12,14" fill="#000"/></svg><div class="a" style="left:4533px;top:868px;width:446px;height:4px;background:#a0a0a0"></div><div class="a" style="left:4543px;top:903px;width:426px;height:346px;border:3px solid #a2a2a2;border-top:3px solid #a2a2a2"></div><div class="hdr" style="left:4554px;top:883px;width:407px;height:41px"></div><div class="t" style="left:4578px;top:889px;font-size:28px;color:#000;">−</div><div class="t c" style="left:4757px;top:903.5px;font-size:29px;color:#000;"><span class="k"><i>オ</i><i>ブ</i><i>ジ</i><i>ェ</i><i>ク</i><i>ト</i></span> <span class="k"><i>タ</i><i>イ</i><i>プ</i></span></div><div class="a" style="left:4608px;top:932px;width:30px;height:29px;background:#fff;border-top:4px solid #8c8c8c;border-left:4px solid #8c8c8c"></div><div class="t c" style="left:4757px;top:946px;font-size:28px;color:#000;"><span class="k"><i>オ</i><i>ー</i><i>ト</i></span> <span class="k"><i>グ</i><i>リ</i><i>ッ</i><i>ド</i></span></div><div class="btn" style="left:4555px;top:976px;width:204px;height:46px"></div><div class="btn" style="left:4767px;top:976px;width:200px;height:46px"></div><div class="t c" style="left:4657px;top:999px;font-size:29px;color:#000;"><span class="k"><i>ボ</i><i>ッ</i><i>ク</i><i>ス</i></span></div><div class="t c" style="left:4867px;top:999px;font-size:29px;color:#000;"><span class="k"><i>円</i><i>錐</i></span></div><div class="btn" style="left:4555px;top:1030px;width:204px;height:46px"></div><div class="btn" style="left:4767px;top:1030px;width:200px;height:46px"></div><div class="t c" style="left:4657px;top:1053px;font-size:29px;color:#000;"><span class="k"><i>球</i></span></div><div class="t c" style="left:4867px;top:1053px;font-size:29px;color:#000;"><span class="k"><i>天</i><i>球</i><i>体</i></span></div><div class="btn" style="left:4555px;top:1084px;width:204px;height:46px"></div><div class="btn" style="left:4767px;top:1084px;width:200px;height:46px"></div><div class="t c" style="left:4657px;top:1107px;font-size:29px;color:#000;"><span class="k"><i>円</i><i>柱</i></span></div><div class="t c" style="left:4867px;top:1107px;font-size:29px;color:#000;"><span class="k"><i>チ</i><i>ュ</i><i>ー</i><i>ブ</i></span></div><div class="btn" style="left:4555px;top:1138px;width:204px;height:46px"></div><div class="btn" style="left:4767px;top:1138px;width:200px;height:46px"></div><div class="t c" style="left:4657px;top:1161px;font-size:29px;color:#000;"><span class="k"><i>円</i><i>環</i><i>体</i></span></div><div class="t c" style="left:4867px;top:1161px;font-size:29px;color:#000;"><span class="k"><i>ピ</i><i>ラ</i><i>ミ</i><i>ッ</i><i>ド</i></span></div><div class="btn" style="left:4555px;top:1192px;width:204px;height:46px"></div><div class="btn" style="left:4767px;top:1192px;width:200px;height:46px"></div><div class="t c" style="left:4657px;top:1215px;font-size:29px;color:#000;"><span class="k"><i>テ</i><i>ィ</i><i>ー</i><i>ポ</i><i>ッ</i><i>ト</i></span></div><div class="t c" style="left:4867px;top:1215px;font-size:29px;color:#000;"><span class="k"><i>平</i><i>面</i></span></div><div class="a" style="left:4552px;top:977px;width:206px;height:44px;background:#b6f5b4"></div><div class="t c" style="left:4657px;top:999px;font-size:29px;color:#000;"><span class="k"><i>ボ</i><i>ッ</i><i>ク</i><i>ス</i></span></div><div class="a" style="left:4543px;top:1289px;width:426px;height:109px;border:3px solid #a2a2a2;border-top:3px solid #a2a2a2"></div><div class="hdr" style="left:4554px;top:1269px;width:407px;height:40px"></div><div class="t" style="left:4578px;top:1275px;font-size:28px;color:#000;">−</div><div class="t c" style="left:4757px;top:1289.0px;font-size:29px;color:#000;"><span class="k"><i>名</i><i>前</i><i>と</i><i>カ</i><i>ラ</i><i>ー</i></span></div><div class="fld" style="left:4565px;top:1328px;width:336px;height:49px"></div><div class="t" style="left:4573px;top:1340px;font-size:27px;color:#000;">Box004</div><div class="a" style="left:4913px;top:1328px;width:44px;height:50px;background:#fff;border-left:3px solid #9a9a9a;border-top:3px solid #e8e8e8"></div><div class="a" style="left:4543px;top:1438px;width:426px;height:90px;border:3px solid #a2a2a2;border-top:3px solid #a2a2a2"></div><div class="hdr" style="left:4554px;top:1418px;width:407px;height:41px"></div><div class="t" style="left:4578px;top:1424px;font-size:28px;color:#000;">−</div><div class="t c" style="left:4757px;top:1438.5px;font-size:29px;color:#000;"><span class="k"><i>作</i><i>成</i><i>方</i><i>法</i></span></div><svg class="a" style="left:4613px;top:1478px" width="26" height="26"><circle cx="13" cy="13" r="10" fill="#fff" stroke="#888" stroke-width="3"/></svg><div class="t" style="left:4656px;top:1476px;font-size:29px;color:#000;"><span class="k"><i>立</i><i>方</i><i>体</i></span></div><svg class="a" style="left:4789px;top:1478px" width="26" height="26"><circle cx="13" cy="13" r="10" fill="#fff" stroke="#999" stroke-width="3"/><circle cx="13" cy="13" r="5" fill="#000"/></svg><div class="t" style="left:4833px;top:1476px;font-size:29px;color:#000;"><span class="k"><i>ボ</i><i>ッ</i><i>ク</i><i>ス</i></span></div><div class="hdr" style="left:4554px;top:1548px;width:407px;height:39px"></div><div class="t" style="left:4578px;top:1554px;font-size:28px;color:#000;">+</div><div class="t c" style="left:4757px;top:1567.5px;font-size:29px;color:#000;"><span class="k"><i>キ</i><i>ー</i><i>ボ</i><i>ー</i><i>ド</i><i>入</i><i>力</i></span></div><div class="a" style="left:4543px;top:1568px;width:3px;height:20px;background:#a2a2a2"></div><div class="a" style="left:4966px;top:1568px;width:3px;height:20px;background:#a2a2a2"></div><div class="a" style="left:4543px;top:1620px;width:426px;height:525px;border:3px solid #a2a2a2;border-top:3px solid #a2a2a2"></div><div class="hdr" style="left:4554px;top:1600px;width:407px;height:39px"></div><div class="t" style="left:4578px;top:1606px;font-size:28px;color:#000;">−</div><div class="t c" style="left:4757px;top:1619.5px;font-size:29px;color:#000;"><span class="k"><i>パ</i><i>ラ</i><i>メ</i><i>ー</i><i>タ</i></span></div><div class="fld" style="left:4788px;top:1662px;width:134px;height:38px"></div><div class="t" style="left:4796px;top:1669px;font-size:27px;color:#222;">30000.0</div><div class="t" style="right:253px;top:1667px;font-size:28px;color:#000"><span class="k"><i>長</i><i>さ</i></span> :</div><div class="a" style="left:4931px;top:1662px;width:26px;height:38px;background:#efefef;border-right:2px solid #a0a0a0;border-bottom:2px solid #a0a0a0"></div><svg class="a" style="left:4936px;top:1666px" width="16" height="30"><polygon points="8,3 14,11 2,11" fill="#000"/><polygon points="2,19 14,19 8,27" fill="#000"/></svg><div class="fld" style="left:4788px;top:1716px;width:134px;height:38px"></div><div class="t" style="left:4796px;top:1723px;font-size:27px;color:#222;">30000.0</div><div class="t" style="right:253px;top:1721px;font-size:28px;color:#000"><span class="k"><i>幅</i></span> :</div><div class="a" style="left:4931px;top:1716px;width:26px;height:38px;background:#efefef;border-right:2px solid #a0a0a0;border-bottom:2px solid #a0a0a0"></div><svg class="a" style="left:4936px;top:1720px" width="16" height="30"><polygon points="8,3 14,11 2,11" fill="#000"/><polygon points="2,19 14,19 8,27" fill="#000"/></svg><div class="fld" style="left:4788px;top:1771px;width:134px;height:38px"></div><div class="t" style="left:4796px;top:1778px;font-size:27px;color:#222;">30000.0</div><div class="t" style="right:253px;top:1776px;font-size:28px;color:#000"><span class="k"><i>高</i><i>さ</i></span> :</div><div class="a" style="left:4931px;top:1771px;width:26px;height:38px;background:#efefef;border-right:2px solid #a0a0a0;border-bottom:2px solid #a0a0a0"></div><svg class="a" style="left:4936px;top:1775px" width="16" height="30"><polygon points="8,3 14,11 2,11" fill="#000"/><polygon points="2,19 14,19 8,27" fill="#000"/></svg><div class="fld" style="left:4788px;top:1843px;width:134px;height:38px"></div><div class="t" style="left:4796px;top:1850px;font-size:27px;color:#222;">30</div><div class="t" style="right:253px;top:1848px;font-size:28px;color:#000"><span class="k"><i>長</i><i>さ</i><i>セ</i><i>グ</i><i>メ</i><i>ン</i><i>ト</i></span> :</div><div class="a" style="left:4931px;top:1843px;width:26px;height:38px;background:#efefef;border-right:2px solid #a0a0a0;border-bottom:2px solid #a0a0a0"></div><svg class="a" style="left:4936px;top:1847px" width="16" height="30"><polygon points="8,3 14,11 2,11" fill="#000"/><polygon points="2,19 14,19 8,27" fill="#000"/></svg><div class="fld" style="left:4788px;top:1898px;width:134px;height:38px"></div><div class="t" style="left:4796px;top:1905px;font-size:27px;color:#222;">30</div><div class="t" style="right:253px;top:1903px;font-size:28px;color:#000"><span class="k"><i>幅</i><i>セ</i><i>グ</i><i>メ</i><i>ン</i><i>ト</i></span> :</div><div class="a" style="left:4931px;top:1898px;width:26px;height:38px;background:#efefef;border-right:2px solid #a0a0a0;border-bottom:2px solid #a0a0a0"></div><svg class="a" style="left:4936px;top:1902px" width="16" height="30"><polygon points="8,3 14,11 2,11" fill="#000"/><polygon points="2,19 14,19 8,27" fill="#000"/></svg><div class="fld" style="left:4788px;top:1952px;width:134px;height:38px"></div><div class="t" style="left:4796px;top:1959px;font-size:27px;color:#222;">30</div><div class="t" style="right:253px;top:1957px;font-size:28px;color:#000"><span class="k"><i>高</i><i>さ</i><i>セ</i><i>グ</i><i>メ</i><i>ン</i><i>ト</i></span> :</div><div class="a" style="left:4931px;top:1952px;width:26px;height:38px;background:#efefef;border-right:2px solid #a0a0a0;border-bottom:2px solid #a0a0a0"></div><svg class="a" style="left:4936px;top:1956px" width="16" height="30"><polygon points="8,3 14,11 2,11" fill="#000"/><polygon points="2,19 14,19 8,27" fill="#000"/></svg><div class="a" style="left:4562px;top:2017px;width:30px;height:30px;background:#fff;border-top:4px solid #888;border-left:4px solid #888"></div><svg class="a" style="left:4566px;top:2020px" width="24" height="24"><path d="M3 12L9 19L20 4" stroke="#000" stroke-width="4" fill="none"/></svg><div class="t" style="left:4605px;top:2019px;font-size:28px;color:#000;"><span class="k"><i>マ</i><i>ッ</i><i>ピ</i><i>ン</i><i>グ</i><i>座</i><i>標</i><i>を</i><i>生</i><i>成</i></span></div><div class="a" style="left:4562px;top:2072px;width:30px;height:30px;background:#fff;border-top:4px solid #888;border-left:4px solid #888"></div><svg class="a" style="left:4566px;top:2075px" width="24" height="24"><path d="M3 12L9 19L20 4" stroke="#000" stroke-width="4" fill="none"/></svg><div class="t" style="left:4605px;top:2074px;font-size:28px;color:#000;"><span class="k"><i>リ</i><i>ア</i><i>ル</i></span>-<span class="k"><i>ワ</i><i>ー</i><i>ル</i><i>ド</i></span> <span class="k"><i>マ</i><i>ッ</i><i>プ</i></span> <span class="k"><i>サ</i><i>イ</i><i>ズ</i></span></div><div class="a" style="left:4533px;top:2952px;width:448px;height:3px;background:#fdfdfd"></div><div class="a" style="left:137px;top:2857px;width:4386px;height:47px;background:#bdbdbd"></div><div class="a" style="left:140px;top:2857px;width:37px;height:46px;background:#ececec"></div><div class="t" style="left:150px;top:2868px;font-size:28px;color:#222;">&lt;</div><div class="a" style="left:181px;top:2857px;width:321px;height:44px;background:#efefef;border-right:3px solid #1a1a1a;border-bottom:3px solid #1a1a1a"></div><div class="t c" style="left:341px;top:2879px;font-size:27px;color:#111;">0 / 100</div><div class="a" style="left:503px;top:2857px;width:39px;height:46px;background:#ececec"></div><div class="t" style="left:515px;top:2868px;font-size:28px;color:#222;">&gt;</div><div class="a" style="left:137px;top:2904px;width:4386px;height:2px;background:#f6f6f6"></div><div class="a" style="left:137px;top:2906px;width:4386px;height:67px;background:#efefef"></div><div class="a" style="left:270px;top:2906px;width:4123px;height:67px;background:#c6c6c6"></div><div class="a" style="left:270px;top:2906px;width:4123px;height:3px;background:#9e9e9e"></div><div class="a" style="left:137px;top:2906px;width:133px;height:67px;background:#efefef"></div><div class="a" style="left:35px;top:2857px;width:102px;height:116px;background:#7d7d7d"></div><div class="a" style="left:44px;top:2858px;width:93px;height:110px;background:linear-gradient(#d7d7d7,#c0c0c0);border-radius:10px 0 0 10px"></div><div class="a" style="left:52px;top:2873px;width:80px;height:70px;background:linear-gradient(#9a9da1,#c9cbcd);border:3px solid #8a8a8a"></div><div class="a" style="left:48px;top:2943px;width:89px;height:22px;background:#a8d2ee"></div><svg class="a" style="left:172px;top:2918px" width="46" height="46"><rect x="2" y="2" width="42" height="12" fill="none" stroke="#000" stroke-width="3"/><rect x="2" y="34" width="42" height="10" fill="none" stroke="#000" stroke-width="3"/><path d="M12 30V18M7 22L12 17L17 22M34 18V30M29 26L34 31L39 26" stroke="#000" stroke-width="2.5" fill="none"/></svg><div class="a" style="left:274px;top:2907px;width:21px;height:66px;background:#8aa6c2;opacity:0.8"></div><svg class="a" style="left:0;top:0" width="5031" height="3579"><path d="M282.4 2906V2972M323.4 2906V2938M364.3 2906V2938M405.3 2906V2938M446.2 2906V2938M487.2 2906V2972M528.2 2906V2938M569.1 2906V2938M610.1 2906V2938M651.0 2906V2938M692.0 2906V2972M733.0 2906V2938M773.9 2906V2938M814.9 2906V2938M855.8 2906V2938M896.8 2906V2972M937.8 2906V2938M978.7 2906V2938M1019.7 2906V2938M1060.6 2906V2938M1101.6 2906V2972M1142.6 2906V2938M1183.5 2906V2938M1224.5 2906V2938M1265.4 2906V2938M1306.4 2906V2972M1347.4 2906V2938M1388.3 2906V2938M1429.3 2906V2938M1470.2 2906V2938M1511.2 2906V2972M1552.2 2906V2938M1593.1 2906V2938M1634.1 2906V2938M1675.0 2906V2938M1716.0 2906V2972M1757.0 2906V2938M1797.9 2906V2938M1838.9 2906V2938M1879.8 2906V2938M1920.8 2906V2972M1961.8 2906V2938M2002.7 2906V2938M2043.7 2906V2938M2084.6 2906V2938M2125.6 2906V2972M2166.6 2906V2938M2207.5 2906V2938M2248.5 2906V2938M2289.4 2906V2938M2330.4 2906V2972M2371.4 2906V2938M2412.3 2906V2938M2453.3 2906V2938M2494.2 2906V2938M2535.2 2906V2972M2576.2 2906V2938M2617.1 2906V2938M2658.1 2906V2938M2699.0 2906V2938M2740.0 2906V2972M2781.0 2906V2938M2821.9 2906V2938M2862.9 2906V2938M2903.8 2906V2938M2944.8 2906V2972M2985.8 2906V2938M3026.7 2906V2938M3067.7 2906V2938M3108.6 2906V2938M3149.6 2906V2972M3190.6 2906V2938M3231.5 2906V2938M3272.5 2906V2938M3313.4 2906V2938M3354.4 2906V2972M3395.4 2906V2938M3436.3 2906V2938M3477.3 2906V2938M3518.2 2906V2938M3559.2 2906V2972M3600.2 2906V2938M3641.1 2906V2938M3682.1 2906V2938M3723.0 2906V2938M3764.0 2906V2972M3805.0 2906V2938M3845.9 2906V2938M3886.9 2906V2938M3927.8 2906V2938M3968.8 2906V2972M4009.8 2906V2938M4050.7 2906V2938M4091.7 2906V2938M4132.6 2906V2938M4173.6 2906V2972M4214.6 2906V2938M4255.5 2906V2938M4296.5 2906V2938M4337.4 2906V2938M4378.4 2906V2972" stroke="#6e6e6e" stroke-width="2.2" fill="none"/></svg><div class="t c" style="left:282.4px;top:2955px;font-size:26px;color:#111;">0</div><div class="t c" style="left:487.2px;top:2955px;font-size:26px;color:#111;">5</div><div class="t c" style="left:692.0px;top:2955px;font-size:26px;color:#111;">10</div><div class="t c" style="left:896.8px;top:2955px;font-size:26px;color:#111;">15</div><div class="t c" style="left:1101.6px;top:2955px;font-size:26px;color:#111;">20</div><div class="t c" style="left:1306.4px;top:2955px;font-size:26px;color:#111;">25</div><div class="t c" style="left:1511.1999999999998px;top:2955px;font-size:26px;color:#111;">30</div><div class="t c" style="left:1716.0px;top:2955px;font-size:26px;color:#111;">35</div><div class="t c" style="left:1920.8000000000002px;top:2955px;font-size:26px;color:#111;">40</div><div class="t c" style="left:2125.6px;top:2955px;font-size:26px;color:#111;">45</div><div class="t c" style="left:2330.4px;top:2955px;font-size:26px;color:#111;">50</div><div class="t c" style="left:2535.2000000000003px;top:2955px;font-size:26px;color:#111;">55</div><div class="t c" style="left:2740.0px;top:2955px;font-size:26px;color:#111;">60</div><div class="t c" style="left:2944.8px;top:2955px;font-size:26px;color:#111;">65</div><div class="t c" style="left:3149.6000000000004px;top:2955px;font-size:26px;color:#111;">70</div><div class="t c" style="left:3354.4px;top:2955px;font-size:26px;color:#111;">75</div><div class="t c" style="left:3559.2000000000003px;top:2955px;font-size:26px;color:#111;">80</div><div class="t c" style="left:3764.0px;top:2955px;font-size:26px;color:#111;">85</div><div class="t c" style="left:3968.8px;top:2955px;font-size:26px;color:#111;">90</div><div class="t c" style="left:4173.6px;top:2955px;font-size:26px;color:#111;">95</div><div class="t c" style="left:4378.4px;top:2955px;font-size:26px;color:#111;">100</div><div class="a" style="left:137px;top:2973px;width:4386px;height:3px;background:#f8f8f8"></div><div class="a" style="left:35px;top:2976px;width:4961px;height:123px;background:#efefef"></div><div class="a" style="left:40px;top:2981px;width:247px;height:52px;background:#dcc5c5;border-top:4px solid #8d8d8d;border-left:3px solid #8d8d8d"></div><div class="a" style="left:40px;top:3040px;width:247px;height:53px;background:#fff;border-top:4px solid #8d8d8d;border-left:3px solid #8d8d8d"></div><div class="t" style="left:55px;top:3052px;font-size:27px;color:#000;">MAXScript <span class="k"><i>に</i><i>よ</i><i>る</i></span></div><div class="a" style="left:294px;top:2976px;width:3px;height:122px;background:#a0a0a0"></div><div class="a" style="left:302px;top:2976px;width:2px;height:122px;background:#fdfdfd"></div><div class="a" style="left:313px;top:2984px;width:2325px;height:53px;background:#efefef;border-top:3px solid #a4a4a4;border-left:3px solid #a4a4a4"></div><div class="t" style="left:329px;top:2998px;font-size:28px;color:#000;">1 <span class="k"><i>個</i><i>の</i><i>オ</i><i>ブ</i><i>ジ</i><i>ェ</i><i>ク</i><i>ト</i><i>が</i><i>選</i><i>択</i><i>さ</i><i>れ</i><i>ま</i><i>し</i><i>た</i></span></div><div class="a" style="left:313px;top:3049px;width:3160px;height:50px;background:#efefef;border-top:3px solid #a4a4a4;border-left:3px solid #a4a4a4"></div><div class="t" style="left:327px;top:3061px;font-size:28px;color:#000;"><span class="k"><i>ク</i><i>リ</i><i>ッ</i><i>ク</i><i>と</i><i>ド</i><i>ラ</i><i>ッ</i><i>グ</i><i>で</i><i>作</i><i>成</i><i>処</i><i>理</i><i>を</i><i>開</i><i>始</i><i>し</i><i>ま</i><i>す</i></span></div><svg class="a" style="left:2655px;top:2988px" width="36" height="44"><ellipse cx="18" cy="15" rx="12" ry="14" fill="#c87880" stroke="#333" stroke-width="2"/><path d="M14 28V40M22 28V40" stroke="#333" stroke-width="3"/></svg><svg class="a" style="left:2727px;top:2988px" width="32" height="42"><path d="M8 18V11A8 8 0 0 1 24 11V18" stroke="#b0b0b0" stroke-width="4" fill="none"/><rect x="4" y="18" width="24" height="22" fill="#c4c4c4" stroke="#a8a8a8" stroke-width="2"/></svg><svg class="a" style="left:2794px;top:2989px" width="40" height="40"><rect x="2" y="2" width="36" height="36" fill="none" stroke="#222" stroke-width="3"/><circle cx="20" cy="20" r="8" fill="none" stroke="#222" stroke-width="3"/><path d="M20 2V12M20 28V38M2 20H12M28 20H38" stroke="#222" stroke-width="3"/></svg><div class="t" style="left:2856px;top:2995px;font-size:28px;color:#222;">X:</div><div class="t" style="left:3085px;top:2995px;font-size:28px;color:#222;">Y:</div><div class="t" style="left:3313px;top:2995px;font-size:28px;color:#222;">Z:</div><div class="fld" style="left:2900px;top:2985px;width:147px;height:52px"></div><div class="fld" style="left:3131px;top:2985px;width:147px;height:52px"></div><div class="fld" style="left:3359px;top:2985px;width:147px;height:52px"></div><div class="a" style="left:3545px;top:2985px;width:258px;height:52px;background:#efefef;border-top:2px solid #a8a8a8;border-left:3px solid #a8a8a8"></div><div class="t" style="left:3558px;top:2997px;font-size:28px;color:#111;"><span class="k"><i>グ</i><i>リ</i><i>ッ</i><i>ド</i></span> = 10.0</div><div class="a" style="left:3484px;top:3048px;width:51px;height:51px;background:#ecc75a;border-left:3px solid #a0a0a0;border-top:3px solid #a0a0a0"></div><svg class="a" style="left:3492px;top:3056px" width="36" height="36"><rect x="3" y="10" width="22" height="22" fill="none" stroke="#333" stroke-width="3"/><path d="M3 10L12 3H33V24L25 32M25 10L33 3" stroke="#333" stroke-width="3" fill="none"/></svg><div class="a" style="left:3545px;top:3050px;width:258px;height:49px;background:#efefef;border-top:3px solid #a8a8a8;border-left:3px solid #a8a8a8"></div><div class="t" style="left:3558px;top:3061px;font-size:28px;color:#111;"><span class="k"><i>時</i><i>間</i><i>タ</i><i>グ</i><i>を</i><i>追</i><i>加</i></span></div><div class="btn" style="left:3813px;top:2983px;width:111px;height:110px"></div><svg class="a" style="left:3836px;top:3020px" width="66" height="36"><circle cx="14" cy="16" r="10" fill="none" stroke="#000" stroke-width="6"/><path d="M24 16H62M46 16V28M56 16V26" stroke="#000" stroke-width="6"/></svg><div class="btn" style="left:3935px;top:2981px;width:164px;height:56px"></div><div class="t c" style="left:4017px;top:3008px;font-size:28px;color:#111;"><span class="k"><i>オ</i><i>ー</i><i>ト</i><i>キ</i><i>ー</i></span></div><div class="btn" style="left:3935px;top:3037px;width:164px;height:56px"></div><div class="t c" style="left:4017px;top:3066px;font-size:28px;color:#111;"><span class="k"><i>セ</i><i>ッ</i><i>ト</i><i>キ</i><i>ー</i></span></div><div class="a" style="left:4110px;top:2983px;width:294px;height:48px;background:linear-gradient(#f8f8f8,#e4e4e4 50%,#cfcfcf);border-top:3px solid #8a8a8a;border-left:3px solid #8a8a8a"></div><div class="t" style="left:4120px;top:2993px;font-size:28px;color:#111;"><span class="k"><i>選</i><i>択</i></span></div><svg class="a" style="left:4376px;top:3002px" width="18" height="12"><polygon points="0,0 18,0 9,11" fill="#222"/></svg><svg class="a" style="left:4118px;top:3047px" width="46" height="46"><path d="M3 40C12 38 14 8 22 8C30 8 30 38 40 38" stroke="#c03a5a" stroke-width="3" fill="none"/><path d="M22 8V40" stroke="#3a3a8a" stroke-width="2"/></svg><div class="btn" style="left:4177px;top:3042px;width:230px;height:51px"></div><div class="t c" style="left:4292px;top:3068px;font-size:28px;color:#111;"><span class="k"><i>キ</i><i>ー</i></span> <span class="k"><i>フ</i><i>ィ</i><i>ル</i><i>タ</i></span>...</div><svg class="a" style="left:4430px;top:2993px" width="50" height="30"><rect x="6" y="4" width="5" height="22" fill="#1a1a1a"/><polygon points="12,15 26,4 26,26" fill="#1a1a1a"/><polygon points="24,15 40,4 40,26" fill="#1a1a1a"/></svg><svg class="a" style="left:4497px;top:2993px" width="50" height="30"><polygon points="6,15 20,4 20,26" fill="#1a1a1a"/><rect x="22" y="4" width="5" height="22" fill="#1a1a1a"/><rect x="30" y="4" width="5" height="22" fill="#1a1a1a"/><rect x="38" y="4" width="5" height="22" fill="#1a1a1a"/></svg><svg class="a" style="left:4557px;top:2993px" width="50" height="30"><polygon points="16,4 36,15 16,26" fill="#1a1a1a"/></svg><svg class="a" style="left:4613px;top:2993px" width="50" height="30"><rect x="6" y="4" width="5" height="22" fill="#1a1a1a"/><rect x="14" y="4" width="5" height="22" fill="#1a1a1a"/><rect x="22" y="4" width="5" height="22" fill="#1a1a1a"/><polygon points="30,4 44,15 30,26" fill="#1a1a1a"/></svg><svg class="a" style="left:4683px;top:2993px" width="50" height="30"><polygon points="8,4 24,15 8,26" fill="#1a1a1a"/><polygon points="22,4 36,15 22,26" fill="#1a1a1a"/><rect x="38" y="4" width="5" height="22" fill="#1a1a1a"/></svg><div class="a" style="left:4490px;top:2988px;width:3px;height:40px;background:#b8b8b8"></div><div class="a" style="left:4676px;top:2988px;width:3px;height:40px;background:#b8b8b8"></div><div class="a" style="left:4752px;top:2988px;width:3px;height:40px;background:#b8b8b8"></div><svg class="a" style="left:4430px;top:3052px" width="50" height="30"><rect x="6" y="4" width="4" height="22" fill="#1a1a1a"/><polygon points="12,15 22,6 22,24" fill="#1a1a1a"/><polygon points="36,15 26,6 26,24" fill="#1a1a1a"/><rect x="38" y="4" width="4" height="22" fill="#1a1a1a"/></svg><div class="fld" style="left:4495px;top:3042px;width:160px;height:51px"></div><div class="t" style="left:4503px;top:3054px;font-size:28px;color:#111;">0</div><svg class="a" style="left:4663px;top:3050px" width="20" height="36"><polygon points="10,2 18,12 2,12" fill="#111"/><polygon points="2,22 18,22 10,32" fill="#111"/></svg><div class="a" style="left:4690px;top:3045px;width:3px;height:48px;background:#b0b0b0"></div><svg class="a" style="left:4758px;top:2985px" width="46" height="46"><circle cx="18" cy="18" r="11" fill="#f4f4f4" stroke="#333" stroke-width="3"/><path d="M26 26L38 38" stroke="#333" stroke-width="5"/><path d="M34 4V14M29 9H39" stroke="#333" stroke-width="2"/></svg><svg class="a" style="left:4820px;top:2985px" width="46" height="46"><rect x="3" y="3" width="30" height="30" fill="none" stroke="#333" stroke-width="3"/><path d="M18 3V33M3 18H33" stroke="#333" stroke-width="3"/><circle cx="30" cy="30" r="7" fill="#f4f4f4" stroke="#333" stroke-width="3"/><path d="M35 35L42 42" stroke="#333" stroke-width="3"/></svg><svg class="a" style="left:4880px;top:2985px" width="46" height="46"><path d="M3 12V3H12M34 3H43V12M43 34V43H34M12 43H3V34" stroke="#333" stroke-width="3" fill="none"/><polygon points="14,18 24,12 34,18 34,32 24,38 14,32" fill="#6b8a50" stroke="#222" stroke-width="2"/></svg><svg class="a" style="left:4939px;top:2985px" width="46" height="46"><rect x="18" y="3" width="25" height="25" fill="none" stroke="#333" stroke-width="3"/><path d="M30 3V28M18 15H43" stroke="#333" stroke-width="3"/><polygon points="4,22 14,16 26,22 26,40 14,44 4,40" fill="#6b8a50" stroke="#222" stroke-width="2"/></svg><svg class="a" style="left:4703px;top:3046px" width="46" height="46"><rect x="2" y="2" width="30" height="38" fill="#f4f4f4" stroke="#333" stroke-width="3"/><rect x="6" y="6" width="12" height="12" fill="#3a5a9a"/><rect x="21" y="6" width="7" height="8" fill="#8aa0c0"/><circle cx="32" cy="32" r="11" fill="#e8e8e8" stroke="#777" stroke-width="3"/><path d="M32 24V32H38" stroke="#222" stroke-width="2.5" fill="none"/></svg><svg class="a" style="left:4758px;top:3044px" width="46" height="46"><path d="M3 3H24V10M3 3V24" stroke="#333" stroke-width="3" stroke-dasharray="4 3" fill="none"/><circle cx="26" cy="26" r="10" fill="#f4f4f4" stroke="#333" stroke-width="3"/><path d="M33 33L42 42" stroke="#333" stroke-width="5"/></svg><svg class="a" style="left:4820px;top:3044px" width="46" height="46"><path d="M10 40C4 30 4 22 8 20C12 18 14 26 14 26V8C14 4 19 4 19 8V20V5C19 1 24 1 24 5V20V6C24 2 29 2 29 6V22V10C29 6 34 6 34 10V30C34 38 30 42 24 42Z" fill="#f4f4f4" stroke="#333" stroke-width="2.5"/></svg><svg class="a" style="left:4880px;top:3044px" width="46" height="46"><ellipse cx="22" cy="30" rx="18" ry="8" fill="none" stroke="#333" stroke-width="3"/><polygon points="14,26 22,10 30,26" fill="#6b8a50"/><path d="M40 30L34 26M40 30L34 34" stroke="#333" stroke-width="3"/></svg><svg class="a" style="left:4939px;top:3044px" width="46" height="46"><rect x="3" y="3" width="40" height="40" fill="none" stroke="#333" stroke-width="3"/><path d="M12 12L30 30M12 12H22M12 12V22" stroke="#333" stroke-width="3" fill="none"/></svg><svg class="a" style="left:0;top:0" width="5031" height="3579" viewBox="0 0 5031 3579"><g stroke="#e60012" stroke-width="7.5" fill="none"><path d="M3683 1059V2361M3683 1062L4490 770M3683 1340L4490 1048M3683 2178L4595 1858"/></g><g fill="#e60012"><polygon points="4537.6,753.6 4457.6,741 4482,771 4484.7,814.8"/><polygon points="4537.6,1030.5 4457.6,1018 4481,1049 4484.7,1092"/><polygon points="4640.7,1842.6 4561.2,1830.6 4587,1858 4585.3,1905.3"/></g><g stroke="#e60012" stroke-width="7.5" fill="none"><circle cx="4584" cy="754" r="31"/><ellipse cx="4654" cy="998" rx="118" ry="35"/><ellipse cx="4827" cy="1828" rx="176" ry="219"/></g></svg><div class="t s" style="left:2646px;top:2408px;font-size:48px;color:#e60012"><span class="j"><i>①</i></span><span class="h"><i>「</i></span><span class="j"><i>作</i><i>成</i></span><span class="h"><i>」</i></span>→<span class="h"><i>「</i></span><span class="j"><i>ジ</i><i>オ</i><i>メ</i><i>ト</i><i>リ</i></span><span class="h"><i>」</i></span>→<span class="h"><i>「</i></span><span class="j"><i>ボ</i><i>ッ</i><i>ク</i><i>ス</i></span><span class="h"><i>」</i></span> <span class="j"><i>に</i><i>て</i><i>モ</i><i>デ</i><i>ル</i><i>を</i><i>作</i><i>成</i></span></div><div class="t s" style="left:2646px;top:2492px;font-size:48px;color:#e60012"><span class="j"><i>大</i><i>き</i><i>さ</i><i>は</i><i>任</i><i>意</i><i>で</i><i>よ</i><i>い</i><i>で</i><i>す</i><i>が</i><i>セ</i><i>グ</i><i>メ</i><i>ン</i><i>ト</i><i>数</i><i>は</i><i>多</i><i>め</i><i>の</i><i>ほ</i><i>う</i><i>が</i><i>わ</i><i>か</i><i>り</i><i>や</i><i>す</i><i>い</i><i>で</i><i>す</i><i>。</i></span></div><div class="t s" style="left:2646px;top:2576px;font-size:48px;color:#e60012"><span class="j"><i>今</i><i>回</i><i>は</i></span> 30000 <span class="j"><i>の</i><i>正</i><i>六</i><i>面</i><i>体</i><i>、</i><i>セ</i><i>グ</i><i>メ</i><i>ン</i><i>ト</i><i>数</i><i>は</i><i>そ</i><i>れ</i><i>ぞ</i><i>れ</i></span> 30 <span class="j"><i>で</i><i>行</i><i>い</i><i>ま</i><i>す</i><i>。</i></span></div></body></html>
